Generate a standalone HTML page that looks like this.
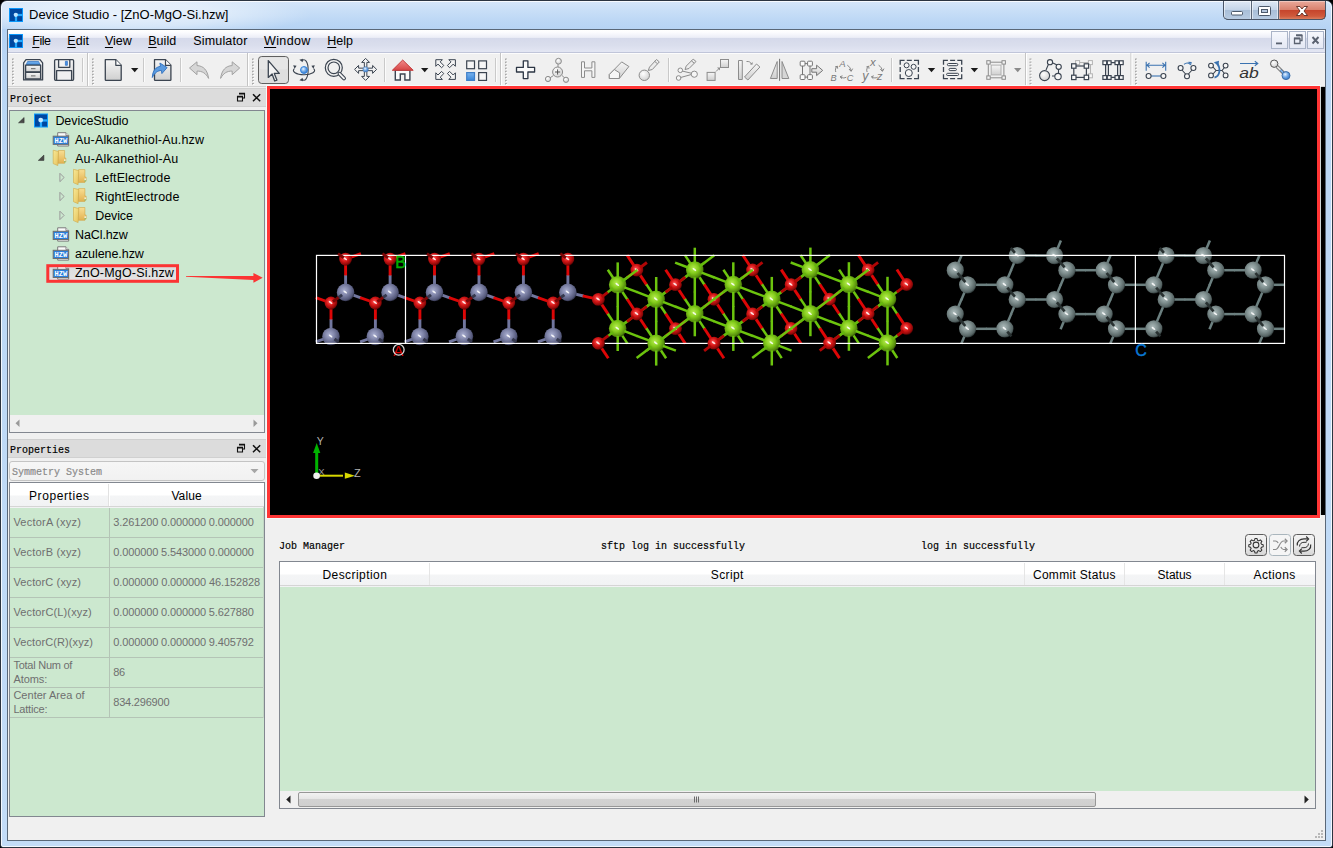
<!DOCTYPE html>
<html><head><meta charset="utf-8"><title>Device Studio</title>
<style>
*{box-sizing:border-box;margin:0;padding:0}
html,body{width:1333px;height:848px;overflow:hidden;background:#000}
body{font-family:"Liberation Sans",sans-serif;font-size:13px;color:#000;position:relative}
.a{position:absolute}
#frame{left:0;top:0;width:1333px;height:848px;background:linear-gradient(180deg,#d6e6f9 0,#c9dff7 9px,#bcd7f5 20px,#b5d3f4 29px,#b9d6f5 60px,#bed9f6 400px,#c3dcf7 100%);border:1px solid #2b3440;border-radius:7px 7px 3px 3px;overflow:hidden}
#frame:before{content:"";position:absolute;left:0;top:0;right:0;bottom:0;border:1px solid rgba(255,255,255,.8);border-radius:6px 6px 2px 2px}
#title{left:29px;top:6px;font-size:13px;line-height:18px;white-space:nowrap}
#client{left:7px;top:29px;width:1319px;height:812px;background:#f0f0f0;border:1px solid #5a6878}
#menubar{left:8px;top:30px;width:1317px;height:23px;background:linear-gradient(180deg,#ffffff 0,#fbfbfe 12%,#eceef7 34%,#d5d9ea 35%,#dadeed 70%,#e3e6f3 100%);border-bottom:1px solid #c0c5d9}
.mi{position:absolute;top:33px;font-size:12.5px;line-height:17px;white-space:nowrap}
.mi u{text-decoration:underline;text-underline-offset:2px;text-decoration-thickness:1px}
.mono{-webkit-text-stroke:.2px currentColor;font-family:"Liberation Mono",monospace;font-size:11px;transform:scaleX(.909);transform-origin:0 50%;white-space:nowrap}
.dockt{left:8px;width:258px;height:19px;background:#dcdcdc;border-top:1px solid #d0d0d0;border-bottom:1px solid #d0d0d0}
.green{background:#cce8cf}
.hdr{background:linear-gradient(180deg,#ffffff 0,#ffffff 48%,#f4f5f6 52%,#f1f2f4 100%)}
.tl{position:absolute;font-size:13.4px;line-height:18px;white-space:nowrap}
.pc{position:absolute;font-size:11px;line-height:14px;color:#6f6f6f;white-space:nowrap}
.hl{position:absolute;height:1px;background:#b4c4b6}
.vl{position:absolute;width:1px;background:#b4c4b6}
.th{position:absolute;font-size:13.4px;line-height:18px;white-space:nowrap;text-align:center}
</style></head><body>
<div id="frame" class="a"></div>
<div class="a" style="left:2px;top:2px;width:330px;height:27px;background:radial-gradient(ellipse 190px 22px at 120px 13px,rgba(255,255,255,.62),rgba(255,255,255,.42) 55%,rgba(255,255,255,0) 100%)"></div>
<div id="title" class="a">Device Studio - [ZnO-MgO-Si.hzw]</div>
<div id="client" class="a"></div>
<div id="menubar" class="a"></div>
<div class="mi" style="left:32.2px;letter-spacing:-0.46px"><u>F</u>ile</div>
<div class="mi" style="left:67.3px;letter-spacing:0.04px"><u>E</u>dit</div>
<div class="mi" style="left:104.9px;letter-spacing:-0.02px"><u>V</u>iew</div>
<div class="mi" style="left:148.2px;letter-spacing:0.04px"><u>B</u>uild</div>
<div class="mi" style="left:193.3px;letter-spacing:0.15px">Simulator</div>
<div class="mi" style="left:264.0px;letter-spacing:0.37px"><u>W</u>indow</div>
<div class="mi" style="left:327.3px;letter-spacing:-0.03px"><u>H</u>elp</div>
<svg class="a" style="left:9px;top:34px" width="14" height="14" viewBox="0 0 15 15"><rect width="15" height="15" fill="#0a9cff"/><rect x="1" y="1" width="13" height="13" fill="#0047a0"/><rect x="6.3" y="7" width="2.4" height="7.5" fill="#22a8ff"/><rect x="7" y="6.3" width="7.5" height="2.4" fill="#22a8ff"/><circle cx="7.3" cy="7.3" r="2.3" fill="#bfe6ff"/></svg>
<svg class="a" style="left:9px;top:8px" width="14" height="14" viewBox="0 0 15 15"><rect width="15" height="15" fill="#0a9cff"/><rect x="1" y="1" width="13" height="13" fill="#0047a0"/><rect x="6.3" y="7" width="2.4" height="7.5" fill="#22a8ff"/><rect x="7" y="6.3" width="7.5" height="2.4" fill="#22a8ff"/><circle cx="7.3" cy="7.3" r="2.3" fill="#bfe6ff"/></svg>
<div class="a" style="left:1223px;top:1px;width:103px;height:19px;border:1px solid #4a5566;border-top:none;border-radius:0 0 5px 5px;overflow:hidden;background:#000">
 <div class="a" style="left:0;top:0;width:28px;height:19px;background:linear-gradient(180deg,#dfe9f5 0,#c5d5e8 45%,#a9bfd8 50%,#b9cde3 100%);border-right:1px solid #5a6676;box-shadow:inset 0 0 0 1px rgba(255,255,255,.55)"></div>
 <div class="a" style="left:28px;top:0;width:27px;height:19px;background:linear-gradient(180deg,#dfe9f5 0,#c5d5e8 45%,#a9bfd8 50%,#b9cde3 100%);border-right:1px solid #5a6676;box-shadow:inset 0 0 0 1px rgba(255,255,255,.55)"></div>
 <div class="a" style="left:55px;top:0;width:47px;height:19px;background:linear-gradient(180deg,#e9a99b 0,#d9826f 45%,#c6452c 50%,#cf5a3c 80%,#dd8a6a 100%);box-shadow:inset 0 0 0 1px rgba(255,255,255,.35)"></div>
</div>
<svg class="a" style="left:1223px;top:0.5px" width="103" height="20" viewBox="0 0 103 20">
 <rect x="8.5" y="10.5" width="11" height="3.5" rx="1" fill="#fff" stroke="#4d5a6b" stroke-width="1"/>
 <rect x="35.5" y="5.5" width="12" height="9" rx="1" fill="#fff" stroke="#4d5a6b" stroke-width="1"/>
 <rect x="38.5" y="8.5" width="6" height="3" fill="#b5c6dc" stroke="#4d5a6b" stroke-width="1"/>
 <path d="M73.5 5.5 L77 5.5 L79 8 L81 5.5 L84.5 5.5 L81 10 L84.5 14.5 L81 14.5 L79 12 L77 14.5 L73.5 14.5 L77 10 Z" fill="#fff" stroke="#5c2a20" stroke-width="0.9" stroke-linejoin="round"/>
</svg>
<!-- mdi buttons -->
<div class="a" style="left:1271px;top:31px;width:17px;height:18px;border:1px solid #aab4c8;background:linear-gradient(180deg,#f6f8fd,#e4e8f4)"></div>
<div class="a" style="left:1289px;top:31px;width:17px;height:18px;border:1px solid #aab4c8;background:linear-gradient(180deg,#f6f8fd,#e4e8f4)"></div>
<div class="a" style="left:1307px;top:31px;width:17px;height:18px;border:1px solid #aab4c8;background:linear-gradient(180deg,#f6f8fd,#e4e8f4)"></div>
<svg class="a" style="left:1271px;top:31px" width="53" height="18" viewBox="0 0 53 18">
 <rect x="5" y="11.5" width="6" height="1.8" fill="#5a6270"/>
 <path d="M25.5 4.5h5.5v5h-2M23.5 7.5h5.5v5h-5.5z" fill="none" stroke="#5a6270" stroke-width="1.3"/>
 <path d="M25 4.2h6.2" stroke="#5a6270" stroke-width="1.8"/><path d="M23 7.4h6" stroke="#5a6270" stroke-width="1.8"/>
 <path d="M41.5 6 L47.5 12.5 M47.5 6 L41.5 12.5" stroke="#5a6270" stroke-width="1.9"/>
</svg>

<div class="a" style="left:8px;top:53px;width:1317px;height:1px;background:#fcfcfc"></div><!--TB0--><svg class="a" style="left:8px;top:53px" width="1317" height="34" viewBox="8 53 1317 34"><defs><linearGradient id="gg" x1="0" y1="0" x2="0" y2="1"><stop offset="0" stop-color="#f6f6f6"/><stop offset="1" stop-color="#cfcfcf"/></linearGradient><linearGradient id="gb" x1="0" y1="0" x2="0" y2="1"><stop offset="0" stop-color="#7ab4ee"/><stop offset="1" stop-color="#3a86d8"/></linearGradient><radialGradient id="rb" cx=".4" cy=".35" r=".7"><stop offset="0" stop-color="#e8f3ff"/><stop offset=".5" stop-color="#6fa8e6"/><stop offset="1" stop-color="#2f74c8"/></radialGradient><radialGradient id="rg" cx=".4" cy=".35" r=".7"><stop offset="0" stop-color="#fff"/><stop offset="1" stop-color="#cfcfcf"/></radialGradient><linearGradient id="gr" x1="0" y1="0" x2="0" y2="1"><stop offset="0" stop-color="#f28a8a"/><stop offset="1" stop-color="#d64545"/></linearGradient></defs>
<rect x="8" y="86" width="1317" height="1" fill="#d2d2d2"/>
<rect x="12" y="58.5" width="2" height="1.6" fill="#a8a8a8"/><rect x="13" y="59.5" width="1.4" height="1.2" fill="#fff"/><rect x="12" y="61.55" width="2" height="1.6" fill="#a8a8a8"/><rect x="13" y="62.55" width="1.4" height="1.2" fill="#fff"/><rect x="12" y="64.6" width="2" height="1.6" fill="#a8a8a8"/><rect x="13" y="65.6" width="1.4" height="1.2" fill="#fff"/><rect x="12" y="67.64999999999999" width="2" height="1.6" fill="#a8a8a8"/><rect x="13" y="68.64999999999999" width="1.4" height="1.2" fill="#fff"/><rect x="12" y="70.69999999999999" width="2" height="1.6" fill="#a8a8a8"/><rect x="13" y="71.69999999999999" width="1.4" height="1.2" fill="#fff"/><rect x="12" y="73.74999999999999" width="2" height="1.6" fill="#a8a8a8"/><rect x="13" y="74.74999999999999" width="1.4" height="1.2" fill="#fff"/><rect x="12" y="76.79999999999998" width="2" height="1.6" fill="#a8a8a8"/><rect x="13" y="77.79999999999998" width="1.4" height="1.2" fill="#fff"/><rect x="12" y="79.84999999999998" width="2" height="1.6" fill="#a8a8a8"/><rect x="13" y="80.84999999999998" width="1.4" height="1.2" fill="#fff"/><rect x="12" y="82.89999999999998" width="2" height="1.6" fill="#a8a8a8"/><rect x="13" y="83.89999999999998" width="1.4" height="1.2" fill="#fff"/>
<rect x="92" y="58.5" width="2" height="1.6" fill="#a8a8a8"/><rect x="93" y="59.5" width="1.4" height="1.2" fill="#fff"/><rect x="92" y="61.55" width="2" height="1.6" fill="#a8a8a8"/><rect x="93" y="62.55" width="1.4" height="1.2" fill="#fff"/><rect x="92" y="64.6" width="2" height="1.6" fill="#a8a8a8"/><rect x="93" y="65.6" width="1.4" height="1.2" fill="#fff"/><rect x="92" y="67.64999999999999" width="2" height="1.6" fill="#a8a8a8"/><rect x="93" y="68.64999999999999" width="1.4" height="1.2" fill="#fff"/><rect x="92" y="70.69999999999999" width="2" height="1.6" fill="#a8a8a8"/><rect x="93" y="71.69999999999999" width="1.4" height="1.2" fill="#fff"/><rect x="92" y="73.74999999999999" width="2" height="1.6" fill="#a8a8a8"/><rect x="93" y="74.74999999999999" width="1.4" height="1.2" fill="#fff"/><rect x="92" y="76.79999999999998" width="2" height="1.6" fill="#a8a8a8"/><rect x="93" y="77.79999999999998" width="1.4" height="1.2" fill="#fff"/><rect x="92" y="79.84999999999998" width="2" height="1.6" fill="#a8a8a8"/><rect x="93" y="80.84999999999998" width="1.4" height="1.2" fill="#fff"/><rect x="92" y="82.89999999999998" width="2" height="1.6" fill="#a8a8a8"/><rect x="93" y="83.89999999999998" width="1.4" height="1.2" fill="#fff"/>
<rect x="252" y="58.5" width="2" height="1.6" fill="#a8a8a8"/><rect x="253" y="59.5" width="1.4" height="1.2" fill="#fff"/><rect x="252" y="61.55" width="2" height="1.6" fill="#a8a8a8"/><rect x="253" y="62.55" width="1.4" height="1.2" fill="#fff"/><rect x="252" y="64.6" width="2" height="1.6" fill="#a8a8a8"/><rect x="253" y="65.6" width="1.4" height="1.2" fill="#fff"/><rect x="252" y="67.64999999999999" width="2" height="1.6" fill="#a8a8a8"/><rect x="253" y="68.64999999999999" width="1.4" height="1.2" fill="#fff"/><rect x="252" y="70.69999999999999" width="2" height="1.6" fill="#a8a8a8"/><rect x="253" y="71.69999999999999" width="1.4" height="1.2" fill="#fff"/><rect x="252" y="73.74999999999999" width="2" height="1.6" fill="#a8a8a8"/><rect x="253" y="74.74999999999999" width="1.4" height="1.2" fill="#fff"/><rect x="252" y="76.79999999999998" width="2" height="1.6" fill="#a8a8a8"/><rect x="253" y="77.79999999999998" width="1.4" height="1.2" fill="#fff"/><rect x="252" y="79.84999999999998" width="2" height="1.6" fill="#a8a8a8"/><rect x="253" y="80.84999999999998" width="1.4" height="1.2" fill="#fff"/><rect x="252" y="82.89999999999998" width="2" height="1.6" fill="#a8a8a8"/><rect x="253" y="83.89999999999998" width="1.4" height="1.2" fill="#fff"/>
<rect x="505" y="58.5" width="2" height="1.6" fill="#a8a8a8"/><rect x="506" y="59.5" width="1.4" height="1.2" fill="#fff"/><rect x="505" y="61.55" width="2" height="1.6" fill="#a8a8a8"/><rect x="506" y="62.55" width="1.4" height="1.2" fill="#fff"/><rect x="505" y="64.6" width="2" height="1.6" fill="#a8a8a8"/><rect x="506" y="65.6" width="1.4" height="1.2" fill="#fff"/><rect x="505" y="67.64999999999999" width="2" height="1.6" fill="#a8a8a8"/><rect x="506" y="68.64999999999999" width="1.4" height="1.2" fill="#fff"/><rect x="505" y="70.69999999999999" width="2" height="1.6" fill="#a8a8a8"/><rect x="506" y="71.69999999999999" width="1.4" height="1.2" fill="#fff"/><rect x="505" y="73.74999999999999" width="2" height="1.6" fill="#a8a8a8"/><rect x="506" y="74.74999999999999" width="1.4" height="1.2" fill="#fff"/><rect x="505" y="76.79999999999998" width="2" height="1.6" fill="#a8a8a8"/><rect x="506" y="77.79999999999998" width="1.4" height="1.2" fill="#fff"/><rect x="505" y="79.84999999999998" width="2" height="1.6" fill="#a8a8a8"/><rect x="506" y="80.84999999999998" width="1.4" height="1.2" fill="#fff"/><rect x="505" y="82.89999999999998" width="2" height="1.6" fill="#a8a8a8"/><rect x="506" y="83.89999999999998" width="1.4" height="1.2" fill="#fff"/>
<rect x="1029.5" y="58.5" width="2" height="1.6" fill="#a8a8a8"/><rect x="1030.5" y="59.5" width="1.4" height="1.2" fill="#fff"/><rect x="1029.5" y="61.55" width="2" height="1.6" fill="#a8a8a8"/><rect x="1030.5" y="62.55" width="1.4" height="1.2" fill="#fff"/><rect x="1029.5" y="64.6" width="2" height="1.6" fill="#a8a8a8"/><rect x="1030.5" y="65.6" width="1.4" height="1.2" fill="#fff"/><rect x="1029.5" y="67.64999999999999" width="2" height="1.6" fill="#a8a8a8"/><rect x="1030.5" y="68.64999999999999" width="1.4" height="1.2" fill="#fff"/><rect x="1029.5" y="70.69999999999999" width="2" height="1.6" fill="#a8a8a8"/><rect x="1030.5" y="71.69999999999999" width="1.4" height="1.2" fill="#fff"/><rect x="1029.5" y="73.74999999999999" width="2" height="1.6" fill="#a8a8a8"/><rect x="1030.5" y="74.74999999999999" width="1.4" height="1.2" fill="#fff"/><rect x="1029.5" y="76.79999999999998" width="2" height="1.6" fill="#a8a8a8"/><rect x="1030.5" y="77.79999999999998" width="1.4" height="1.2" fill="#fff"/><rect x="1029.5" y="79.84999999999998" width="2" height="1.6" fill="#a8a8a8"/><rect x="1030.5" y="80.84999999999998" width="1.4" height="1.2" fill="#fff"/><rect x="1029.5" y="82.89999999999998" width="2" height="1.6" fill="#a8a8a8"/><rect x="1030.5" y="83.89999999999998" width="1.4" height="1.2" fill="#fff"/>
<rect x="1135" y="58.5" width="2" height="1.6" fill="#a8a8a8"/><rect x="1136" y="59.5" width="1.4" height="1.2" fill="#fff"/><rect x="1135" y="61.55" width="2" height="1.6" fill="#a8a8a8"/><rect x="1136" y="62.55" width="1.4" height="1.2" fill="#fff"/><rect x="1135" y="64.6" width="2" height="1.6" fill="#a8a8a8"/><rect x="1136" y="65.6" width="1.4" height="1.2" fill="#fff"/><rect x="1135" y="67.64999999999999" width="2" height="1.6" fill="#a8a8a8"/><rect x="1136" y="68.64999999999999" width="1.4" height="1.2" fill="#fff"/><rect x="1135" y="70.69999999999999" width="2" height="1.6" fill="#a8a8a8"/><rect x="1136" y="71.69999999999999" width="1.4" height="1.2" fill="#fff"/><rect x="1135" y="73.74999999999999" width="2" height="1.6" fill="#a8a8a8"/><rect x="1136" y="74.74999999999999" width="1.4" height="1.2" fill="#fff"/><rect x="1135" y="76.79999999999998" width="2" height="1.6" fill="#a8a8a8"/><rect x="1136" y="77.79999999999998" width="1.4" height="1.2" fill="#fff"/><rect x="1135" y="79.84999999999998" width="2" height="1.6" fill="#a8a8a8"/><rect x="1136" y="80.84999999999998" width="1.4" height="1.2" fill="#fff"/><rect x="1135" y="82.89999999999998" width="2" height="1.6" fill="#a8a8a8"/><rect x="1136" y="83.89999999999998" width="1.4" height="1.2" fill="#fff"/>
<rect x="82.0" y="58" width="1" height="24" fill="#c9c9c9"/><rect x="83.0" y="58" width="1" height="24" fill="#fbfbfb"/>
<rect x="143.0" y="58" width="1" height="24" fill="#c9c9c9"/><rect x="144.0" y="58" width="1" height="24" fill="#fbfbfb"/>
<rect x="180.0" y="58" width="1" height="24" fill="#c9c9c9"/><rect x="181.0" y="58" width="1" height="24" fill="#fbfbfb"/>
<rect x="384.0" y="58" width="1" height="24" fill="#c9c9c9"/><rect x="385.0" y="58" width="1" height="24" fill="#fbfbfb"/>
<rect x="495.0" y="58" width="1" height="24" fill="#c9c9c9"/><rect x="496.0" y="58" width="1" height="24" fill="#fbfbfb"/>
<rect x="668.0" y="58" width="1" height="24" fill="#c9c9c9"/><rect x="669.0" y="58" width="1" height="24" fill="#fbfbfb"/>
<rect x="891.0" y="58" width="1" height="24" fill="#c9c9c9"/><rect x="892.0" y="58" width="1" height="24" fill="#fbfbfb"/>
<rect x="87.0" y="53" width="1" height="33" fill="#c4c4c4"/><rect x="88.0" y="53" width="1" height="33" fill="#ffffff"/>
<rect x="247.0" y="53" width="1" height="33" fill="#c4c4c4"/><rect x="248.0" y="53" width="1" height="33" fill="#ffffff"/>
<rect x="500.0" y="53" width="1" height="33" fill="#c4c4c4"/><rect x="501.0" y="53" width="1" height="33" fill="#ffffff"/>
<rect x="1025.0" y="53" width="1" height="33" fill="#c4c4c4"/><rect x="1026.0" y="53" width="1" height="33" fill="#ffffff"/>
<rect x="1130.5" y="53" width="1" height="33" fill="#c4c4c4"/><rect x="1131.5" y="53" width="1" height="33" fill="#ffffff"/>
<g stroke="#3b4450" stroke-width="1.3" fill="url(#gg)" stroke-linejoin="round"><path d="M26 59.7h14l2.6 3.2v17H23.6v-17z"/><path d="M27.6 61.5h11l1.6 3.6H26z" fill="url(#gb)" stroke="#3d7cc8" stroke-width=".8"/><rect x="25.6" y="65.2" width="15" height="6.6"/><rect x="25.6" y="72.4" width="15" height="6.6"/><path d="M31 68.7h4.5M31 75.9h4.5" stroke="#666" stroke-width="1"/></g>
<g stroke="#3b4450" stroke-width="1.3" fill="url(#gg)" stroke-linejoin="round"><rect x="54.6" y="59.7" width="19" height="20.6" rx="1"/><rect x="58.6" y="59.7" width="11.2" height="7.6" fill="#f4f4f4"/><rect x="56.6" y="70.6" width="15" height="9.7" fill="#f0f0f0"/><rect x="65.4" y="61.3" width="2" height="4" fill="#4b93e6" stroke="#2a6fc4" stroke-width=".7"/></g>
<path d="M105.3 59.7h10.5l5.4 5.6v14.4q0 .7-.7.7h-14.5q-.7 0-.7-.7z" fill="url(#gg)" stroke="#3b4450" stroke-width="1.3" stroke-linejoin="round"/><path d="M115.8 59.7v5.6h5.4" fill="#fff" stroke="#3b4450" stroke-width="1.2" stroke-linejoin="round"/>
<path d="M131 68 h7.4 l-3.7 4.3z" fill="#1a1a1a"/>
<path d="M154.5 59.7h11l5.4 5.6v14.4q0 .7-.7.7h-15q-.7 0-.7-.7z" fill="url(#gg)" stroke="#3b4450" stroke-width="1.3" stroke-linejoin="round"/><path d="M165.5 59.7v5.6h5.4" fill="#fff" stroke="#3b4450" stroke-width="1.2" stroke-linejoin="round"/>
<path d="M152.3 77.5c0.3-7 3.5-10.5 8.2-11.2l-0.6-3.3 7.2 4.6-5.2 6-0.5-3.2c-3.6 0.3-6.5 2-9.1 7.1z" fill="#5b9be0" stroke="#2f6fbd" stroke-width=".9" stroke-linejoin="round"/>
<path d="M189.5 68l7.5-6.2v3.8c6.5 0.2 10.5 4.6 11.6 12.8-2.8-5.2-6.3-7.4-11.6-7.3v3.6z" fill="#d6d6d6" stroke="#a2a2a2" stroke-width="1" stroke-linejoin="round"/>
<path d="M239.7 68l-7.5-6.2v3.8c-6.5 0.2-10.5 4.6-11.6 12.8 2.8-5.2 6.3-7.4 11.6-7.3v3.6z" fill="#d6d6d6" stroke="#a2a2a2" stroke-width="1" stroke-linejoin="round"/>
<rect x="258.5" y="56.5" width="30" height="27" rx="3.2" fill="#dedede" stroke="#5f5f5f" stroke-width="1"/><rect x="259.5" y="57.5" width="28" height="12" rx="2" fill="#e6e6e6"/>
<path d="M268.3 60.6v16.8l3.8-3.4 2.6 7 2.2-.9-2.6-6.7h5z" fill="#f2f2f2" stroke="#3b4450" stroke-width="1.3" stroke-linejoin="round"/>
<g fill="none" stroke="#3b4450" stroke-width="1.1"><path d="M294.4 68.7A10.6 4.2 0 0 0 304 74.7A10.6 4.2 0 0 0 313.6 68.7"/><path d="M302 60.9A4.2 10.3 0 1 1 302 79.1"/></g><path d="M293.2 65.200l3.4.6-2 3z M314.8 65.200l-3.4.6 2 3z M299.4 59.800l3.6-1 -.4 3.400z M299.4 80.200l3.6 1-.4-3.400z" fill="#3b4450"/><circle cx="304" cy="70" r="3.5" fill="url(#rb)" stroke="#2f7fd8" stroke-width=".9"/>
<g fill="none" stroke="#3b4450"><circle cx="333.8" cy="67.8" r="8.5" stroke-width="1.2"/><circle cx="333.8" cy="67.8" r="5.8" stroke-width="1.2"/><path d="M339.6 73.800l4.4 4.6" stroke-width="4" stroke-linecap="round"/><path d="M339.6 73.800l4.4 4.6" stroke="#f4f4f4" stroke-width="1.9" stroke-linecap="round"/></g>
<path d="M364.35 67.4V62.400000000000006h-2.7l3.95-4 3.95 4h-2.7V67.4z" transform="rotate(0 365.6 69.4)" fill="#f4f4f4" stroke="#3b4450" stroke-width="1" stroke-linejoin="round"/><path d="M364.35 67.4V62.400000000000006h-2.7l3.95-4 3.95 4h-2.7V67.4z" transform="rotate(90 365.6 69.4)" fill="#f4f4f4" stroke="#3b4450" stroke-width="1" stroke-linejoin="round"/><path d="M364.35 67.4V62.400000000000006h-2.7l3.95-4 3.95 4h-2.7V67.4z" transform="rotate(180 365.6 69.4)" fill="#f4f4f4" stroke="#3b4450" stroke-width="1" stroke-linejoin="round"/><path d="M364.35 67.4V62.400000000000006h-2.7l3.95-4 3.95 4h-2.7V67.4z" transform="rotate(270 365.6 69.4)" fill="#f4f4f4" stroke="#3b4450" stroke-width="1" stroke-linejoin="round"/><circle cx="365.6" cy="69.4" r="2.7" fill="url(#rb)" stroke="#5a7fae" stroke-width=".5"/>
<path d="M395.3 70v10h5v-6h4.6v6h5V70z" fill="#fafafa" stroke="#3b4450" stroke-width="1.4" stroke-linejoin="miter"/><path d="M392.3 70.3L402.7 60l10.5 10.3z" fill="url(#gr)" stroke="#c43c3c" stroke-width="1" stroke-linejoin="round"/>
<path d="M421 68 h7.4 l-3.7 4.3z" fill="#1a1a1a"/>
<g transform="translate(435.8,59.7) scale(1,1)"><path d="M0 0h6.6l-2.2 2.2 3.6 3.6-2.2 2.2-3.6-3.6L0 6.6z" fill="#f4f4f4" stroke="#3b4450" stroke-width="1" stroke-linejoin="round"/></g><g transform="translate(455.4,59.7) scale(-1,1)"><path d="M0 0h6.6l-2.2 2.2 3.6 3.6-2.2 2.2-3.6-3.6L0 6.6z" fill="#f4f4f4" stroke="#3b4450" stroke-width="1" stroke-linejoin="round"/></g><g transform="translate(435.8,79.4) scale(1,-1)"><path d="M0 0h6.6l-2.2 2.2 3.6 3.6-2.2 2.2-3.6-3.6L0 6.6z" fill="#f4f4f4" stroke="#3b4450" stroke-width="1" stroke-linejoin="round"/></g><g transform="translate(455.4,79.4) scale(-1,-1)"><path d="M0 0h6.6l-2.2 2.2 3.6 3.6-2.2 2.2-3.6-3.6L0 6.6z" fill="#f4f4f4" stroke="#3b4450" stroke-width="1" stroke-linejoin="round"/></g>
<g stroke="#3b4450" stroke-width="1.2" fill="#f6f6f6"><rect x="466.7" y="60.9" width="7.8" height="7.8"/><rect x="478.7" y="60.9" width="7.8" height="7.8"/><rect x="478.7" y="72.6" width="7.8" height="7.8"/><rect x="466.7" y="72.6" width="7.8" height="7.8" fill="url(#gb)" stroke="#3f7fc8"/></g>
<path d="M523.3 60.9h4.6v6.5h6.7v4.6h-6.7v6.6h-4.6v-6.6h-6.8v-4.6h6.8z" fill="#fafafa" stroke="#2c3644" stroke-width="1.3" stroke-linejoin="round"/>
<g stroke="#8c8c8c" stroke-width="1"><path d="M558 64v4M553.5 75.5l-3.5 2.3M562 75.5l3 2.8" /><circle cx="558.5" cy="61.2" r="2.9" fill="url(#rg)"/><circle cx="548" cy="79" r="2.6" fill="url(#rg)"/><circle cx="566" cy="79.8" r="2.6" fill="url(#rg)"/><circle cx="557.6" cy="72" r="5" fill="url(#rg)"/><path d="M555 72h5.2M557.6 69.4v5.2" stroke="#555" stroke-width="1"/></g>
<path d="M581.5 61.8h3v6.2h7.4v-6.2h3v15.6h-3v-6.6h-7.4v6.6h-3z" fill="#f6f6f6" stroke="#8c8c8c" stroke-width="1" stroke-linejoin="round"/>
<path d="M609.3 74.5l12.4-12.6 7.2 4.6-9.6 12h-10z" fill="url(#gg)" stroke="#8c8c8c" stroke-width="1" stroke-linejoin="round"/><path d="M609.3 74.5l5-5 5.4 3.4-0.4 5.6h-10z" fill="#f6f6f6" stroke="#8c8c8c" stroke-width="1" stroke-linejoin="round"/>
<circle cx="644.3" cy="75.3" r="5.2" fill="url(#rg)" stroke="#8c8c8c" stroke-width="1"/><path d="M648.3 70.5l1.2-3.4 7-7.6 2.8 2.4-7 7.6z" fill="#ececec" stroke="#8c8c8c" stroke-width="1" stroke-linejoin="round"/><path d="M654.6 61.3l2.8 2.4" stroke="#8c8c8c" stroke-width="1"/>
<g stroke="#8c8c8c" stroke-width="1"><path d="M680 70.5l12.5 3M679.5 77.8l13-3.6"/><circle cx="680.3" cy="70.3" r="2.3" fill="#f6f6f6"/><circle cx="678.6" cy="78" r="2.3" fill="#f6f6f6"/><circle cx="694.3" cy="74.2" r="3.1" fill="#f6f6f6"/><path d="M685 69.5l1.2-3.4 7-7 2.8 2.4-7 7z" fill="#ececec" stroke-linejoin="round"/><path d="M691.4 60.8l2.8 2.4"/></g>
<g stroke="#8c8c8c" stroke-width="1" fill="url(#gg)"><rect x="707.1" y="72.4" width="8" height="8"/><rect x="720.5" y="59.5" width="8" height="8"/><path d="M716 71.5l3.5-3.5" fill="none"/><path d="M717 67.6h3v3z" fill="#8c8c8c" stroke="none"/></g>
<g stroke="#8c8c8c" stroke-width="1" fill="url(#gg)" stroke-linejoin="round"><rect x="738.5" y="60.5" width="3.8" height="19"/><path d="M744.5 77l12-13 3.4 3-12 13z"/><path d="M746.5 61.5c2.5-.3 4.3.6 5 2.8" fill="none"/><path d="M750 64.6h2.6v-2.6z" fill="#8c8c8c" stroke="none"/></g>
<g stroke="#8c8c8c" stroke-width="1" stroke-linejoin="round"><path d="M770.4 78.5h6.8v-17z" fill="url(#gg)"/><path d="M788.8 78.5h-6.8v-17z" fill="#d6d6d6"/><path d="M779.6 58.8v22" stroke="#707070"/></g>
<g stroke="#757575" stroke-width="1" fill="#fbfbfb"><path d="M802.5 66v9M810 66v9M805 63.600h2.500M805 77.100h2.5" fill="none"/><rect x="800.2" y="61.2" width="4.8" height="4.8" rx=".9"/><rect x="807.6" y="61.2" width="4.8" height="4.8" rx=".9"/><rect x="800.2" y="74.7" width="4.8" height="4.8" rx=".9"/><rect x="807.6" y="74.7" width="4.8" height="4.8" rx=".9"/><path d="M811.8 68.700h4.800v-3.500l6.1 5.2-6.1 5.200v-3.400h-4.800z" fill="url(#gg)" stroke-linejoin="round"/></g>
<g font-family="Liberation Sans" font-style="italic" fill="#7a7a7a"><text x="839.3" y="66.9" font-size="9.6">A</text><text x="830.4" y="80.7" font-size="9.2">B</text><text x="846.8" y="80.7" font-size="9.2">C</text></g><g fill="none" stroke="#7a7a7a" stroke-width=".9"><path d="M847.3 65.200c2.2 1.4 3.3 3.2 3.8 5.8"/><path d="M849 69l2.1 2.4 1.6-2.8"/><path d="M846.3 77.200c-1.8 1-3.6 1-5.6-.2"/><path d="M842.8 75.800l-2.5 1 2 1.9" transform="translate(-.3,0)"/><path d="M835.8 72c-.8-2.2-.3-3.9 1.2-5.4"/><path d="M835 67l2.4-.8.3 2.5"/></g>
<g font-family="Liberation Sans" font-style="italic" fill="#7a7a7a"><text x="870" y="65.8" font-size="11.5">x</text><text x="862.3" y="79.6" font-size="12.5">y</text><text x="876.8" y="79.7" font-size="11.5">z</text></g><g fill="none" stroke="#7a7a7a" stroke-width=".9"><path d="M878.5999999999999 65.200c2.2 1.4 3.3 3.2 3.8 5.8"/><path d="M880.3 69l2.1 2.4 1.6-2.8"/><path d="M877.5999999999999 77.200c-1.8 1-3.6 1-5.6-.2"/><path d="M874.0999999999999 75.800l-2.5 1 2 1.9" transform="translate(-.3,0)"/><path d="M867.0999999999999 72c-.8-2.2-.3-3.9 1.2-5.4"/><path d="M866.3 67l2.4-.8.3 2.5"/></g>
<g fill="none" stroke="#3b4450" stroke-width="1.3"><path d="M900.2 64.8v-4.4h4.4M914.0000000000001 60.4h4.4v4.4M918.4000000000001 74.19999999999999v4.4h-4.4M904.6 78.6h-4.4v-4.4"/><path d="M906.8000000000001 60.4h4.999999999999998M906.8000000000001 78.6h4.999999999999998M900.2 67.0v4.999999999999998M918.4000000000001 67.0v4.999999999999998"/></g>
<g fill="#f6f6f6" stroke="#3b4450" stroke-width="1"><circle cx="906.6" cy="65.3" r="2.5"/><circle cx="913.6" cy="66.8" r="2.5"/><circle cx="908.8" cy="73" r="3.5"/></g>
<path d="M927.8 68 h7.4 l-3.7 4.3z" fill="#1a1a1a"/>
<g fill="none" stroke="#3b4450" stroke-width="1.3"><path d="M943.5 64.8v-4.4h4.4M957.3000000000001 60.4h4.4v4.4M961.7 74.19999999999999v4.4h-4.4M947.9 78.6h-4.4v-4.4"/><path d="M950.1 60.4h4.999999999999998M950.1 78.6h4.999999999999998M943.5 67.0v4.999999999999998M961.7 67.0v4.999999999999998"/></g>
<g fill="#f6f6f6" stroke="#3b4450" stroke-width="1"><rect x="947.4" y="63.5" width="10.4" height="2.2" rx="1.1"/><rect x="949" y="68.4" width="7.4" height="2.2" rx="1.1"/><rect x="946.6" y="73.3" width="12" height="2.2" rx="1.1"/></g>
<path d="M970.7 68 h7.4 l-3.7 4.3z" fill="#1a1a1a"/>
<g stroke="#8c8c8c" stroke-width="1" fill="#f4f4f4"><rect x="988.3" y="62.2" width="15.6" height="15.6" fill="none"/><rect x="991.2" y="65.1" width="9.8" height="9.8" fill="url(#gg)" stroke="#b0b0b0"/><rect x="986.8" y="60.7" width="3.4" height="3.4"/><rect x="1002" y="60.7" width="3.4" height="3.4"/><rect x="986.8" y="75.9" width="3.4" height="3.4"/><rect x="1002" y="75.9" width="3.4" height="3.4"/></g>
<path d="M1014 68 h7.4 l-3.7 4.3z" fill="#8a8a8a"/>
<g stroke="#3b4450" stroke-width="1.1"><path d="M1046 70l3-7M1053 63l5 2.5M1058.5 69v5M1052 76h3" fill="none"/><circle cx="1050" cy="62.2" r="2.6" fill="#f6f6f6"/><circle cx="1058.7" cy="66.8" r="2.6" fill="#f6f6f6"/><circle cx="1058" cy="76.6" r="3.2" fill="#f6f6f6"/><circle cx="1044.6" cy="75.6" r="5" fill="url(#rg)"/></g>
<g stroke="#b4b4b4" stroke-width="1" fill="#f8f8f8"><path d="M1078 62.5h12.5v12.5" fill="none"/><rect x="1075.6" y="60.6" width="4" height="4"/><rect x="1088.4" y="60.6" width="4" height="4"/><rect x="1088.4" y="73.8" width="4" height="4"/></g>
<g stroke="#3b4450" stroke-width="1.2" fill="#fafafa"><rect x="1073.8" y="66" width="12.6" height="11.4" fill="none"/><rect x="1071.6" y="63.8" width="4.4" height="4.4"/><rect x="1084.2" y="63.8" width="4.4" height="4.4"/><rect x="1071.6" y="75.2" width="4.4" height="4.4"/><rect x="1084.2" y="75.2" width="4.4" height="4.4"/></g>
<g stroke="#3b4450" stroke-width="1.2" fill="#fafafa"><path d="M1104 62.7h18M1104 77.3h18M1105.6 62v16M1108.4 62v16M1117.6 62v16M1120.4 62v16" fill="none"/><rect x="1102.9" y="60.8" width="3.8" height="3.8"/><rect x="1107.3" y="60.8" width="3.8" height="3.8"/><rect x="1115" y="60.8" width="3.8" height="3.8"/><rect x="1119.4" y="60.8" width="3.8" height="3.8"/><rect x="1102.9" y="75.6" width="3.8" height="3.8"/><rect x="1107.3" y="75.6" width="3.8" height="3.8"/><rect x="1115" y="75.6" width="3.8" height="3.8"/><rect x="1119.4" y="75.6" width="3.8" height="3.8"/></g>
<g fill="none" stroke="#3a72b0" stroke-width="1.1"><path d="M1146.2 61.8v9M1165.7 61.8v9M1147 65.2h18M1149.6 62.8l-2.6 2.4 2.6 2.4M1162.4 62.8l2.6 2.4-2.6 2.4"/></g><g stroke="#3b4450" stroke-width="1.1" fill="#f6f6f6"><path d="M1151 76h10" stroke="#3a72b0"/><circle cx="1148.6" cy="76" r="2.5"/><circle cx="1163.4" cy="76" r="2.5"/></g>
<g stroke="#3b4450" stroke-width="1.1" fill="#f6f6f6"><path d="M1181.5 69.5l4.5 5M1192.5 69.5l-4.5 5" fill="none"/><circle cx="1180.6" cy="68" r="2.5"/><circle cx="1193.4" cy="68" r="2.5"/><circle cx="1187" cy="76.2" r="2.5"/></g><path d="M1184 64.4c2-1.8 4.2-1.8 6.2-.2" fill="none" stroke="#3a72b0" stroke-width="1.1"/><path d="M1188.4 62.3l2.7.3-.6 2.6" fill="none" stroke="#3a72b0" stroke-width="1.1"/>
<g stroke="#3b4450" stroke-width="1.1" fill="#f6f6f6"><path d="M1213 67l3 3.5-3 3.500M1216 70.500h6l2.5-3M1222 70.500l2.5 3" fill="none"/><circle cx="1211" cy="65.6" r="2.4"/><circle cx="1225.6" cy="65.6" r="2.4"/><circle cx="1211" cy="75.4" r="2.4"/><circle cx="1225.6" cy="75.4" r="2.4"/></g><path d="M1214.5 77.500c5.5-1 6.5-9 2.5-14.5" fill="none" stroke="#3a72b0" stroke-width="1.8"/><path d="M1213.8 62.300l5.2-1.6-.600 5.200z" fill="#3a72b0"/>
<path d="M1240 63.500h17.500M1254.8 61.200l3 2.3-3 2.3" fill="none" stroke="#3a72b0" stroke-width="1.1"/><text x="1239.2" y="77.5" font-family="Liberation Sans" font-style="italic" font-size="15.5" fill="#333" textLength="19.5" lengthAdjust="spacingAndGlyphs">ab</text>
<path d="M1277 66.500l7 7" stroke="#555" stroke-width="3.4"/><path d="M1277 66.500l3.5 3.5" stroke="#e0e0e0" stroke-width="2"/><path d="M1280.5 70l3.5 3.5" stroke="#79aee8" stroke-width="2"/><circle cx="1274.2" cy="63.7" r="3.7" fill="url(#rg)" stroke="#555" stroke-width="1"/><circle cx="1286" cy="75.6" r="4" fill="url(#rb)" stroke="#3b6ea8" stroke-width="1"/></svg><!--TB1-->
<!-- left dock: project -->
<div class="a dockt" style="top:88px"></div>
<div class="a mono" style="left:10px;top:92px;line-height:14px">Project</div>
<div class="a green" style="left:9px;top:110px;width:256px;height:323px;border:1px solid #828790"></div>
<div class="a" style="left:10px;top:415px;width:254px;height:17px;background:#f0f0f0"></div>
<!--TR0--><div class="a" style="left:49px;top:267px;width:127px;height:13px;background:linear-gradient(180deg,#dcdcdc,#e4e4e4)"></div>
<div class="tl" style="left:55.4px;top:112.4px;font-size:12.500px;letter-spacing:-0.05px">DeviceStudio</div>
<div class="tl" style="left:75.0px;top:131.0px;font-size:12.500px;letter-spacing:0.16px">Au-Alkanethiol-Au.hzw</div>
<div class="tl" style="left:75.0px;top:150.0px;font-size:12.500px;letter-spacing:0.20px">Au-Alkanethiol-Au</div>
<div class="tl" style="left:95.3px;top:169.1px;font-size:12.500px;letter-spacing:0.12px">LeftElectrode</div>
<div class="tl" style="left:95.3px;top:188.1px;font-size:12.500px;letter-spacing:0.16px">RightElectrode</div>
<div class="tl" style="left:95.3px;top:207.0px;font-size:12.500px;letter-spacing:-0.13px">Device</div>
<div class="tl" style="left:75.0px;top:226.1px;font-size:12.500px;letter-spacing:-0.10px">NaCl.hzw</div>
<div class="tl" style="left:75.0px;top:245.1px;font-size:12.500px;letter-spacing:-0.06px">azulene.hzw</div>
<div class="tl" style="left:75.0px;top:264.1px;font-size:12.500px;letter-spacing:0.18px">ZnO-MgO-Si.hzw</div>
<svg class="a" style="left:0;top:0" width="267" height="480" viewBox="0 0 267 480"><defs><linearGradient id="fb" x1="0" y1="0" x2="0" y2="1"><stop offset="0" stop-color="#f8de92"/><stop offset="1" stop-color="#e2b252"/></linearGradient><linearGradient id="ff" x1="0" y1="0" x2="1" y2="1"><stop offset="0" stop-color="#f7e996"/><stop offset="1" stop-color="#e6c25c"/></linearGradient></defs><g transform="translate(34,113.5)"><rect width="14" height="14" fill="#0a9cff"/><rect x="1" y="1" width="12" height="12" fill="#0047a0"/><rect x="5.8" y="6.5" width="2.3" height="7" fill="#22a8ff"/><rect x="6.5" y="5.8" width="7" height="2.3" fill="#22a8ff"/><circle cx="6.7" cy="6.6" r="2.4" fill="#c4e8ff"/></g>
<path d="M24.1 117.5v5.300h-5.600z" fill="#4a4a4a" stroke="#262626" stroke-width=".5"/>
<g transform="translate(52.7,131.5)"><path d="M5 1.200h8.200l2.8 2.800v10.500h-11z" fill="#fbfbfb" stroke="#7a7a7a" stroke-width="1"/><path d="M13.2 1.200v2.800h2.8" fill="#e8e8e8" stroke="#7a7a7a" stroke-width=".8"/><rect x=".5" y="4.7" width="15.3" height="8.2" fill="#2b7fdc" stroke="#6f6f6f" stroke-width="1"/><text x="8.2" y="11.4" font-family="Liberation Mono" font-weight="bold" font-size="7" fill="#fff" text-anchor="middle" textLength="12.6" lengthAdjust="spacingAndGlyphs">HZW</text></g>
<g transform="translate(52.7,150.0)"><path d="M5.6 .5h6.300v7.500h1.200v4h-1.200v1.300h-6.700z" fill="url(#fb)" stroke="#d2a648" stroke-width=".6"/><path d="M.5 .2l5.3 1.3-.7 14.1-4.6-2z" fill="url(#ff)" stroke="#cfa848" stroke-width=".6" stroke-linejoin="round"/><rect x="11.6" y="9.3" width="1.1" height="2.2" fill="#fff"/><rect x="11.6" y="11.3" width="1.1" height=".9" fill="#3cae4a"/></g>
<path d="M43.9 155.1v5.300h-5.600z" fill="#4a4a4a" stroke="#262626" stroke-width=".5"/>
<g transform="translate(73,169.1)"><path d="M5.6 .5h6.300v7.500h1.200v4h-1.200v1.300h-6.700z" fill="url(#fb)" stroke="#d2a648" stroke-width=".6"/><path d="M.5 .2l5.3 1.3-.7 14.1-4.6-2z" fill="url(#ff)" stroke="#cfa848" stroke-width=".6" stroke-linejoin="round"/><rect x="11.6" y="9.3" width="1.1" height="2.2" fill="#fff"/><rect x="11.6" y="11.3" width="1.1" height=".9" fill="#3cae4a"/></g>
<path d="M59.9 173.29999999999998l4.2 4.2-4.2 4.200z" fill="none" stroke="#9a9a9a" stroke-width="1" stroke-linejoin="round"/>
<g transform="translate(73,188.1)"><path d="M5.6 .5h6.300v7.500h1.200v4h-1.200v1.300h-6.700z" fill="url(#fb)" stroke="#d2a648" stroke-width=".6"/><path d="M.5 .2l5.3 1.3-.7 14.1-4.6-2z" fill="url(#ff)" stroke="#cfa848" stroke-width=".6" stroke-linejoin="round"/><rect x="11.6" y="9.3" width="1.1" height="2.2" fill="#fff"/><rect x="11.6" y="11.3" width="1.1" height=".9" fill="#3cae4a"/></g>
<path d="M59.9 192.29999999999998l4.2 4.2-4.2 4.200z" fill="none" stroke="#9a9a9a" stroke-width="1" stroke-linejoin="round"/>
<g transform="translate(73,207.0)"><path d="M5.6 .5h6.300v7.500h1.200v4h-1.200v1.300h-6.700z" fill="url(#fb)" stroke="#d2a648" stroke-width=".6"/><path d="M.5 .2l5.3 1.3-.7 14.1-4.6-2z" fill="url(#ff)" stroke="#cfa848" stroke-width=".6" stroke-linejoin="round"/><rect x="11.6" y="9.3" width="1.1" height="2.2" fill="#fff"/><rect x="11.6" y="11.3" width="1.1" height=".9" fill="#3cae4a"/></g>
<path d="M59.9 211.2l4.2 4.2-4.2 4.200z" fill="none" stroke="#9a9a9a" stroke-width="1" stroke-linejoin="round"/>
<g transform="translate(52.7,226.6)"><path d="M5 1.200h8.200l2.8 2.800v10.500h-11z" fill="#fbfbfb" stroke="#7a7a7a" stroke-width="1"/><path d="M13.2 1.200v2.800h2.8" fill="#e8e8e8" stroke="#7a7a7a" stroke-width=".8"/><rect x=".5" y="4.7" width="15.3" height="8.2" fill="#2b7fdc" stroke="#6f6f6f" stroke-width="1"/><text x="8.2" y="11.4" font-family="Liberation Mono" font-weight="bold" font-size="7" fill="#fff" text-anchor="middle" textLength="12.6" lengthAdjust="spacingAndGlyphs">HZW</text></g>
<g transform="translate(52.7,245.6)"><path d="M5 1.200h8.200l2.8 2.800v10.500h-11z" fill="#fbfbfb" stroke="#7a7a7a" stroke-width="1"/><path d="M13.2 1.200v2.800h2.8" fill="#e8e8e8" stroke="#7a7a7a" stroke-width=".8"/><rect x=".5" y="4.7" width="15.3" height="8.2" fill="#2b7fdc" stroke="#6f6f6f" stroke-width="1"/><text x="8.2" y="11.4" font-family="Liberation Mono" font-weight="bold" font-size="7" fill="#fff" text-anchor="middle" textLength="12.6" lengthAdjust="spacingAndGlyphs">HZW</text></g>
<g transform="translate(52.7,264.6)"><path d="M5 1.200h8.200l2.8 2.800v10.500h-11z" fill="#fbfbfb" stroke="#7a7a7a" stroke-width="1"/><path d="M13.2 1.200v2.800h2.8" fill="#e8e8e8" stroke="#7a7a7a" stroke-width=".8"/><rect x=".5" y="4.7" width="15.3" height="8.2" fill="#2b7fdc" stroke="#6f6f6f" stroke-width="1"/><text x="8.2" y="11.4" font-family="Liberation Mono" font-weight="bold" font-size="7" fill="#fff" text-anchor="middle" textLength="12.6" lengthAdjust="spacingAndGlyphs">HZW</text></g>
<rect x="47.8" y="265.7" width="129.7" height="15.6" fill="none" stroke="#fb3434" stroke-width="3"/>
<path d="M186 275.9L253.4 276.1V272.9L262.7 277.8L253.4 282.8V280.1L186 276.7Z" fill="#fb3434"/>
<path d="M19.5 419.500l-4 3.8 4 3.800z" fill="#9a9a9a"/><path d="M253.5 419.500l4 3.8-4 3.800z" fill="#9a9a9a"/></svg><!--TR1-->
<!-- left dock: properties -->
<div class="a dockt" style="top:439px"></div>
<div class="a mono" style="left:10px;top:443px;line-height:14px">Properties</div>
<div class="a" style="left:9px;top:461px;width:256px;height:20px;border:1px solid #c4c4c4;border-radius:3px;background:linear-gradient(180deg,#f6f6f6,#f1f1f1)"></div>
<div class="a mono" style="left:12px;top:465px;line-height:14px;color:#8a8a8a">Symmetry System</div>
<div class="a green" style="left:9px;top:482px;width:256px;height:335px;border:1px solid #828790"></div>
<!--PR0--><div class="a hdr" style="left:10px;top:483px;width:254px;height:25px"></div>
<div class="a" style="left:10px;top:506px;width:254px;height:1px;background:#d5d5d5"></div>
<div class="a" style="left:108px;top:484px;width:2px;height:22px;background:linear-gradient(90deg,#e2e2e2 50%,#fff 50%)"></div>
<div class="th" style="left:29px;top:486.5px;font-size:12px;letter-spacing:0.58px">Properties</div>
<div class="th" style="left:171.4px;top:486.5px;font-size:12px;letter-spacing:0.10px">Value</div>
<div class="hl" style="left:10px;top:537px;width:254px"></div>
<div class="hl" style="left:10px;top:567px;width:254px"></div>
<div class="hl" style="left:10px;top:597px;width:254px"></div>
<div class="hl" style="left:10px;top:627px;width:254px"></div>
<div class="hl" style="left:10px;top:657px;width:254px"></div>
<div class="hl" style="left:10px;top:687px;width:254px"></div>
<div class="hl" style="left:10px;top:717px;width:254px"></div>
<div class="vl" style="left:109px;top:508px;height:210px"></div>
<div class="vl" style="left:263px;top:507px;height:211px;background:#c2d6c4"></div>
<div class="pc" style="left:13.4px;top:515.1px;letter-spacing:0.22px">VectorA (xyz)</div>
<div class="pc" style="left:113.3px;top:515.1px;letter-spacing:-0.13px">3.261200 0.000000 0.000000</div>
<div class="pc" style="left:13.4px;top:545.0px;letter-spacing:0.18px">VectorB (xyz)</div>
<div class="pc" style="left:113.3px;top:545.0px;letter-spacing:-0.13px">0.000000 5.543000 0.000000</div>
<div class="pc" style="left:13.4px;top:575.0px;letter-spacing:0.13px">VectorC (xyz)</div>
<div class="pc" style="left:113.3px;top:575.0px;letter-spacing:-0.12px">0.000000 0.000000 46.152828</div>
<div class="pc" style="left:13.4px;top:605.0px;letter-spacing:0.14px">VectorC(L)(xyz)</div>
<div class="pc" style="left:113.3px;top:605.0px;letter-spacing:-0.13px">0.000000 0.000000 5.627880</div>
<div class="pc" style="left:13.4px;top:635.0px;letter-spacing:0.10px">VectorC(R)(xyz)</div>
<div class="pc" style="left:113.3px;top:635.0px;letter-spacing:-0.13px">0.000000 0.000000 9.405792</div>
<div class="pc" style="left:13.4px;top:658.0px;letter-spacing:-0.25px">Total Num of</div>
<div class="pc" style="left:13.4px;top:671.6px;letter-spacing:-0.06px">Atoms:</div>
<div class="pc" style="left:13.4px;top:687.5px;letter-spacing:0.02px">Center Area of</div>
<div class="pc" style="left:13.4px;top:701.5px;letter-spacing:-0.20px">Lattice:</div>
<div class="pc" style="left:113.3px;top:664.6px;letter-spacing:-0.48px">86</div>
<div class="pc" style="left:113.3px;top:694.6px;letter-spacing:-0.21px">834.296900</div>
<svg class="a" style="left:248px;top:466px" width="12" height="10"><path d="M2.5 3h8l-4 4.300z" fill="#a6a6a6"/></svg><!--PR1-->
<!-- viewport -->
<div class="a" style="left:267px;top:87px;width:1058px;height:428px;background:#000"></div>
<div class="a" style="left:267px;top:86px;width:1053px;height:432px;border:3px solid #ff3535;box-shadow:0 0 0 1px rgba(244,253,253,.85)"></div>
<!--VW0--><svg class="a" style="left:270px;top:89px" width="1048" height="427" viewBox="270 89 1048 427"><defs>
<radialGradient id="gZn" cx=".42" cy=".4" r=".62"><stop offset="0" stop-color="#a9aed0"/><stop offset=".45" stop-color="#7f84a8"/><stop offset=".85" stop-color="#54587a"/><stop offset="1" stop-color="#2c2e44"/></radialGradient>
<radialGradient id="gO" cx=".42" cy=".4" r=".62"><stop offset="0" stop-color="#ff5a5a"/><stop offset=".45" stop-color="#d81818"/><stop offset=".85" stop-color="#8e0808"/><stop offset="1" stop-color="#480303"/></radialGradient>
<radialGradient id="gMg" cx=".42" cy=".4" r=".62"><stop offset="0" stop-color="#b6ec50"/><stop offset=".45" stop-color="#84cc1c"/><stop offset=".85" stop-color="#558c0c"/><stop offset="1" stop-color="#2a4a04"/></radialGradient>
<radialGradient id="gSi" cx=".42" cy=".4" r=".62"><stop offset="0" stop-color="#aebcbc"/><stop offset=".45" stop-color="#829292"/><stop offset=".85" stop-color="#566464"/><stop offset="1" stop-color="#2a3434"/></radialGradient>
</defs><g fill="none" stroke-linecap="butt"><path d="M345.6 259.1L345.6 276.1" stroke="#dd0606" stroke-width="2.9"/><path d="M345.6 292.4L345.6 275.4" stroke="#71769e" stroke-width="2.9"/><path d="M331.0 303.0L331.0 320.1" stroke="#dd0606" stroke-width="2.9"/><path d="M331.0 336.5L331.0 319.4" stroke="#71769e" stroke-width="2.9"/><path d="M345.6 292.4L360.9 297.8" stroke="#71769e" stroke-width="2.9"/><path d="M331.0 303.0L315.7 297.6" stroke="#dd0606" stroke-width="2.9"/><path d="M345.6 259.1L360.9 253.7" stroke="#dd0606" stroke-width="2.9"/><path d="M331.0 336.5L315.7 341.9" stroke="#71769e" stroke-width="2.9"/><path d="M390.1 259.1L390.1 276.1" stroke="#dd0606" stroke-width="2.9"/><path d="M390.1 292.4L390.1 275.4" stroke="#71769e" stroke-width="2.9"/><path d="M375.4 303.0L375.4 320.1" stroke="#dd0606" stroke-width="2.9"/><path d="M375.4 336.5L375.4 319.4" stroke="#71769e" stroke-width="2.9"/><path d="M390.1 292.4L405.4 297.8" stroke="#71769e" stroke-width="2.9"/><path d="M375.4 303.0L360.1 297.6" stroke="#dd0606" stroke-width="2.9"/><path d="M390.1 259.1L405.4 253.7" stroke="#dd0606" stroke-width="2.9"/><path d="M375.4 336.5L360.1 341.9" stroke="#71769e" stroke-width="2.9"/><path d="M434.5 259.1L434.5 276.1" stroke="#dd0606" stroke-width="2.9"/><path d="M434.5 292.4L434.5 275.4" stroke="#71769e" stroke-width="2.9"/><path d="M419.9 303.0L419.9 320.1" stroke="#dd0606" stroke-width="2.9"/><path d="M419.9 336.5L419.9 319.4" stroke="#71769e" stroke-width="2.9"/><path d="M434.5 292.4L449.8 297.8" stroke="#71769e" stroke-width="2.9"/><path d="M419.9 303.0L404.6 297.6" stroke="#dd0606" stroke-width="2.9"/><path d="M434.5 259.1L449.8 253.7" stroke="#dd0606" stroke-width="2.9"/><path d="M419.9 336.5L404.6 341.9" stroke="#71769e" stroke-width="2.9"/><path d="M479.0 259.1L479.0 276.1" stroke="#dd0606" stroke-width="2.9"/><path d="M479.0 292.4L479.0 275.4" stroke="#71769e" stroke-width="2.9"/><path d="M464.4 303.0L464.4 320.1" stroke="#dd0606" stroke-width="2.9"/><path d="M464.4 336.5L464.4 319.4" stroke="#71769e" stroke-width="2.9"/><path d="M479.0 292.4L494.3 297.8" stroke="#71769e" stroke-width="2.9"/><path d="M464.4 303.0L449.0 297.6" stroke="#dd0606" stroke-width="2.9"/><path d="M479.0 259.1L494.3 253.7" stroke="#dd0606" stroke-width="2.9"/><path d="M464.4 336.5L449.0 341.9" stroke="#71769e" stroke-width="2.9"/><path d="M523.4 259.1L523.4 276.1" stroke="#dd0606" stroke-width="2.9"/><path d="M523.4 292.4L523.4 275.4" stroke="#71769e" stroke-width="2.9"/><path d="M508.8 303.0L508.8 320.1" stroke="#dd0606" stroke-width="2.9"/><path d="M508.8 336.5L508.8 319.4" stroke="#71769e" stroke-width="2.9"/><path d="M523.4 292.4L538.7 297.8" stroke="#71769e" stroke-width="2.9"/><path d="M508.8 303.0L493.5 297.6" stroke="#dd0606" stroke-width="2.9"/><path d="M523.4 259.1L538.7 253.7" stroke="#dd0606" stroke-width="2.9"/><path d="M508.8 336.5L493.5 341.9" stroke="#71769e" stroke-width="2.9"/><path d="M567.9 259.1L567.9 276.1" stroke="#dd0606" stroke-width="2.9"/><path d="M567.9 292.4L567.9 275.4" stroke="#71769e" stroke-width="2.9"/><path d="M553.2 303.0L553.2 320.1" stroke="#dd0606" stroke-width="2.9"/><path d="M553.2 336.5L553.2 319.4" stroke="#71769e" stroke-width="2.9"/><path d="M553.2 303.0L537.9 297.6" stroke="#dd0606" stroke-width="2.9"/><path d="M553.2 336.5L537.9 341.9" stroke="#71769e" stroke-width="2.9"/><path d="M567.9 292.4L583.5 296.0" stroke="#71769e" stroke-width="2.9"/><path d="M598.4 299.4L582.7 295.8" stroke="#dd0606" stroke-width="2.9"/><path d="M598.4 299.4L608.3 314.4" stroke="#dd0606" stroke-width="2.9"/><path d="M617.7 328.6L627.5 343.6" stroke="#6cc40e" stroke-width="2.5"/><path d="M617.7 328.6L607.8 313.7" stroke="#6cc40e" stroke-width="2.5"/><path d="M636.9 270.1L646.8 285.1" stroke="#dd0606" stroke-width="2.9"/><path d="M636.9 270.1L627.1 255.1" stroke="#dd0606" stroke-width="2.9"/><path d="M656.2 299.3L666.1 314.3" stroke="#6cc40e" stroke-width="2.5"/><path d="M656.2 299.3L646.4 284.4" stroke="#6cc40e" stroke-width="2.5"/><path d="M675.5 328.6L685.3 343.6" stroke="#dd0606" stroke-width="2.9"/><path d="M675.5 328.6L665.6 313.6" stroke="#dd0606" stroke-width="2.9"/><path d="M694.8 270.0L704.6 285.0" stroke="#6cc40e" stroke-width="2.5"/><path d="M694.8 270.0L684.9 255.1" stroke="#6cc40e" stroke-width="2.5"/><path d="M714.0 299.3L723.9 314.3" stroke="#dd0606" stroke-width="2.9"/><path d="M714.0 299.3L704.2 284.3" stroke="#dd0606" stroke-width="2.9"/><path d="M733.3 328.5L743.1 343.5" stroke="#6cc40e" stroke-width="2.5"/><path d="M733.3 328.5L723.4 313.6" stroke="#6cc40e" stroke-width="2.5"/><path d="M752.6 270.0L762.4 285.0" stroke="#dd0606" stroke-width="2.9"/><path d="M752.6 270.0L742.7 255.0" stroke="#dd0606" stroke-width="2.9"/><path d="M771.8 299.2L781.7 314.2" stroke="#6cc40e" stroke-width="2.5"/><path d="M771.8 299.2L762.0 284.3" stroke="#6cc40e" stroke-width="2.5"/><path d="M791.1 328.5L801.0 343.5" stroke="#dd0606" stroke-width="2.9"/><path d="M791.1 328.5L781.2 313.5" stroke="#dd0606" stroke-width="2.9"/><path d="M810.4 269.9L820.2 284.9" stroke="#6cc40e" stroke-width="2.5"/><path d="M810.4 269.9L800.5 255.0" stroke="#6cc40e" stroke-width="2.5"/><path d="M829.6 299.2L839.5 314.2" stroke="#dd0606" stroke-width="2.9"/><path d="M829.6 299.2L819.8 284.2" stroke="#dd0606" stroke-width="2.9"/><path d="M848.9 328.4L858.8 343.4" stroke="#6cc40e" stroke-width="2.5"/><path d="M848.9 328.4L839.1 313.5" stroke="#6cc40e" stroke-width="2.5"/><path d="M868.2 269.9L878.0 284.9" stroke="#dd0606" stroke-width="2.9"/><path d="M868.2 269.9L858.3 254.9" stroke="#dd0606" stroke-width="2.9"/><path d="M887.5 299.1L897.3 314.1" stroke="#6cc40e" stroke-width="2.5"/><path d="M887.5 299.1L877.6 284.2" stroke="#6cc40e" stroke-width="2.5"/><path d="M906.7 328.4L896.9 313.4" stroke="#dd0606" stroke-width="2.9"/><path d="M955.3 270.2L961.6 255.2" stroke="#6c8080" stroke-width="2.5"/><path d="M967.6 284.8L961.3 299.9" stroke="#6c8080" stroke-width="2.5"/><path d="M967.6 284.8L986.7 284.8" stroke="#6c8080" stroke-width="2.5"/><path d="M955.3 314.1L961.6 299.1" stroke="#6c8080" stroke-width="2.5"/><path d="M967.6 328.8L961.3 343.8" stroke="#6c8080" stroke-width="2.5"/><path d="M967.6 328.8L986.7 328.8" stroke="#6c8080" stroke-width="2.5"/><path d="M1017.2 255.5L1010.9 270.6" stroke="#6c8080" stroke-width="2.5"/><path d="M1017.2 255.5L1036.3 255.5" stroke="#6c8080" stroke-width="2.5"/><path d="M1004.9 284.8L1011.3 269.8" stroke="#6c8080" stroke-width="2.5"/><path d="M1004.9 284.8L985.9 284.8" stroke="#6c8080" stroke-width="2.5"/><path d="M1017.2 299.5L1010.9 314.5" stroke="#6c8080" stroke-width="2.5"/><path d="M1017.2 299.5L1036.3 299.5" stroke="#6c8080" stroke-width="2.5"/><path d="M1004.9 328.8L1011.3 313.8" stroke="#6c8080" stroke-width="2.5"/><path d="M1004.9 328.8L985.9 328.8" stroke="#6c8080" stroke-width="2.5"/><path d="M1054.6 255.6L1060.9 240.5" stroke="#6c8080" stroke-width="2.5"/><path d="M1054.6 255.6L1035.5 255.6" stroke="#6c8080" stroke-width="2.5"/><path d="M1066.9 270.2L1060.6 285.2" stroke="#6c8080" stroke-width="2.5"/><path d="M1066.9 270.2L1086.0 270.2" stroke="#6c8080" stroke-width="2.5"/><path d="M1054.6 299.5L1060.9 284.5" stroke="#6c8080" stroke-width="2.5"/><path d="M1054.6 299.5L1035.5 299.5" stroke="#6c8080" stroke-width="2.5"/><path d="M1066.9 314.1L1060.6 329.2" stroke="#6c8080" stroke-width="2.5"/><path d="M1066.9 314.1L1086.0 314.1" stroke="#6c8080" stroke-width="2.5"/><path d="M1104.2 270.2L1110.6 255.2" stroke="#6c8080" stroke-width="2.5"/><path d="M1104.2 270.2L1085.2 270.2" stroke="#6c8080" stroke-width="2.5"/><path d="M1116.5 284.8L1110.2 299.9" stroke="#6c8080" stroke-width="2.5"/><path d="M1116.5 284.8L1135.6 284.8" stroke="#6c8080" stroke-width="2.5"/><path d="M1104.2 314.1L1110.6 299.1" stroke="#6c8080" stroke-width="2.5"/><path d="M1104.2 314.1L1085.2 314.1" stroke="#6c8080" stroke-width="2.5"/><path d="M1116.5 328.8L1110.2 343.8" stroke="#6c8080" stroke-width="2.5"/><path d="M1116.5 328.8L1135.6 328.8" stroke="#6c8080" stroke-width="2.5"/><path d="M1166.2 255.5L1159.9 270.6" stroke="#6c8080" stroke-width="2.5"/><path d="M1166.2 255.5L1185.3 255.5" stroke="#6c8080" stroke-width="2.5"/><path d="M1153.9 284.8L1160.2 269.8" stroke="#6c8080" stroke-width="2.5"/><path d="M1153.9 284.8L1134.8 284.8" stroke="#6c8080" stroke-width="2.5"/><path d="M1166.2 299.5L1159.9 314.5" stroke="#6c8080" stroke-width="2.5"/><path d="M1166.2 299.5L1185.3 299.5" stroke="#6c8080" stroke-width="2.5"/><path d="M1153.9 328.8L1160.2 313.8" stroke="#6c8080" stroke-width="2.5"/><path d="M1153.9 328.8L1134.8 328.8" stroke="#6c8080" stroke-width="2.5"/><path d="M1203.5 255.6L1209.9 240.5" stroke="#6c8080" stroke-width="2.5"/><path d="M1203.5 255.6L1184.5 255.6" stroke="#6c8080" stroke-width="2.5"/><path d="M1215.8 270.2L1209.5 285.2" stroke="#6c8080" stroke-width="2.5"/><path d="M1215.8 270.2L1234.9 270.2" stroke="#6c8080" stroke-width="2.5"/><path d="M1203.5 299.5L1209.9 284.5" stroke="#6c8080" stroke-width="2.5"/><path d="M1203.5 299.5L1184.5 299.5" stroke="#6c8080" stroke-width="2.5"/><path d="M1215.8 314.1L1209.5 329.2" stroke="#6c8080" stroke-width="2.5"/><path d="M1215.8 314.1L1234.9 314.1" stroke="#6c8080" stroke-width="2.5"/><path d="M1253.2 270.2L1259.5 255.2" stroke="#6c8080" stroke-width="2.5"/><path d="M1253.2 270.2L1234.1 270.2" stroke="#6c8080" stroke-width="2.5"/><path d="M1265.5 284.8L1259.2 299.9" stroke="#6c8080" stroke-width="2.5"/><path d="M1265.5 284.8L1284.6 284.8" stroke="#6c8080" stroke-width="2.5"/><path d="M1253.2 314.1L1259.5 299.1" stroke="#6c8080" stroke-width="2.5"/><path d="M1253.2 314.1L1234.1 314.1" stroke="#6c8080" stroke-width="2.5"/><path d="M1265.5 328.8L1259.2 343.8" stroke="#6c8080" stroke-width="2.5"/><path d="M1265.5 328.8L1284.6 328.8" stroke="#6c8080" stroke-width="2.5"/><path d="M617.7 328.6L637.3 313.8" stroke="#6cc40e" stroke-width="2.5"/><path d="M656.2 299.3L675.8 284.5" stroke="#6cc40e" stroke-width="2.5"/><path d="M656.2 299.3L636.6 314.2" stroke="#6cc40e" stroke-width="2.5"/><path d="M694.8 270.0L714.3 255.2" stroke="#6cc40e" stroke-width="2.5"/><path d="M694.8 270.0L675.2 284.9" stroke="#6cc40e" stroke-width="2.5"/><path d="M733.3 328.5L752.9 313.7" stroke="#6cc40e" stroke-width="2.5"/><path d="M733.3 328.5L713.7 343.4" stroke="#6cc40e" stroke-width="2.5"/><path d="M771.8 299.2L791.4 284.4" stroke="#6cc40e" stroke-width="2.5"/><path d="M771.8 299.2L752.2 314.1" stroke="#6cc40e" stroke-width="2.5"/><path d="M810.4 269.9L830.0 255.1" stroke="#6cc40e" stroke-width="2.5"/><path d="M810.4 269.9L790.8 284.8" stroke="#6cc40e" stroke-width="2.5"/><path d="M848.9 328.4L868.5 313.6" stroke="#6cc40e" stroke-width="2.5"/><path d="M848.9 328.4L829.3 343.3" stroke="#6cc40e" stroke-width="2.5"/><path d="M887.5 299.1L867.9 314.0" stroke="#6cc40e" stroke-width="2.5"/><circle cx="345.6" cy="259.1" r="6.4" fill="url(#gO)"/><ellipse cx="345.2" cy="258.7" rx="2.2" ry="0.9" transform="rotate(35 345.2 258.7)" fill="#fff" opacity=".88"/><circle cx="345.6" cy="292.4" r="8.8" fill="url(#gZn)"/><ellipse cx="345.2" cy="292.0" rx="2.2" ry="0.9" transform="rotate(35 345.2 292.0)" fill="#fff" opacity=".88"/><circle cx="331.0" cy="303.0" r="6.4" fill="url(#gO)"/><ellipse cx="330.6" cy="302.6" rx="2.2" ry="0.9" transform="rotate(35 330.6 302.6)" fill="#fff" opacity=".88"/><circle cx="331.0" cy="336.5" r="8.8" fill="url(#gZn)"/><ellipse cx="330.6" cy="336.1" rx="2.2" ry="0.9" transform="rotate(35 330.6 336.1)" fill="#fff" opacity=".88"/><circle cx="390.1" cy="259.1" r="6.4" fill="url(#gO)"/><ellipse cx="389.7" cy="258.7" rx="2.2" ry="0.9" transform="rotate(35 389.7 258.7)" fill="#fff" opacity=".88"/><circle cx="390.1" cy="292.4" r="8.8" fill="url(#gZn)"/><ellipse cx="389.7" cy="292.0" rx="2.2" ry="0.9" transform="rotate(35 389.7 292.0)" fill="#fff" opacity=".88"/><circle cx="375.4" cy="303.0" r="6.4" fill="url(#gO)"/><ellipse cx="375.1" cy="302.6" rx="2.2" ry="0.9" transform="rotate(35 375.1 302.6)" fill="#fff" opacity=".88"/><circle cx="375.4" cy="336.5" r="8.8" fill="url(#gZn)"/><ellipse cx="375.1" cy="336.1" rx="2.2" ry="0.9" transform="rotate(35 375.1 336.1)" fill="#fff" opacity=".88"/><circle cx="434.5" cy="259.1" r="6.4" fill="url(#gO)"/><ellipse cx="434.1" cy="258.7" rx="2.2" ry="0.9" transform="rotate(35 434.1 258.7)" fill="#fff" opacity=".88"/><circle cx="434.5" cy="292.4" r="8.8" fill="url(#gZn)"/><ellipse cx="434.1" cy="292.0" rx="2.2" ry="0.9" transform="rotate(35 434.1 292.0)" fill="#fff" opacity=".88"/><circle cx="419.9" cy="303.0" r="6.4" fill="url(#gO)"/><ellipse cx="419.5" cy="302.6" rx="2.2" ry="0.9" transform="rotate(35 419.5 302.6)" fill="#fff" opacity=".88"/><circle cx="419.9" cy="336.5" r="8.8" fill="url(#gZn)"/><ellipse cx="419.5" cy="336.1" rx="2.2" ry="0.9" transform="rotate(35 419.5 336.1)" fill="#fff" opacity=".88"/><circle cx="479.0" cy="259.1" r="6.4" fill="url(#gO)"/><ellipse cx="478.6" cy="258.7" rx="2.2" ry="0.9" transform="rotate(35 478.6 258.7)" fill="#fff" opacity=".88"/><circle cx="479.0" cy="292.4" r="8.8" fill="url(#gZn)"/><ellipse cx="478.6" cy="292.0" rx="2.2" ry="0.9" transform="rotate(35 478.6 292.0)" fill="#fff" opacity=".88"/><circle cx="464.4" cy="303.0" r="6.4" fill="url(#gO)"/><ellipse cx="464.0" cy="302.6" rx="2.2" ry="0.9" transform="rotate(35 464.0 302.6)" fill="#fff" opacity=".88"/><circle cx="464.4" cy="336.5" r="8.8" fill="url(#gZn)"/><ellipse cx="464.0" cy="336.1" rx="2.2" ry="0.9" transform="rotate(35 464.0 336.1)" fill="#fff" opacity=".88"/><circle cx="523.4" cy="259.1" r="6.4" fill="url(#gO)"/><ellipse cx="523.0" cy="258.7" rx="2.2" ry="0.9" transform="rotate(35 523.0 258.7)" fill="#fff" opacity=".88"/><circle cx="523.4" cy="292.4" r="8.8" fill="url(#gZn)"/><ellipse cx="523.0" cy="292.0" rx="2.2" ry="0.9" transform="rotate(35 523.0 292.0)" fill="#fff" opacity=".88"/><circle cx="508.8" cy="303.0" r="6.4" fill="url(#gO)"/><ellipse cx="508.4" cy="302.6" rx="2.2" ry="0.9" transform="rotate(35 508.4 302.6)" fill="#fff" opacity=".88"/><circle cx="508.8" cy="336.5" r="8.8" fill="url(#gZn)"/><ellipse cx="508.4" cy="336.1" rx="2.2" ry="0.9" transform="rotate(35 508.4 336.1)" fill="#fff" opacity=".88"/><circle cx="567.9" cy="259.1" r="6.4" fill="url(#gO)"/><ellipse cx="567.5" cy="258.7" rx="2.2" ry="0.9" transform="rotate(35 567.5 258.7)" fill="#fff" opacity=".88"/><circle cx="567.9" cy="292.4" r="8.8" fill="url(#gZn)"/><ellipse cx="567.5" cy="292.0" rx="2.2" ry="0.9" transform="rotate(35 567.5 292.0)" fill="#fff" opacity=".88"/><circle cx="553.2" cy="303.0" r="6.4" fill="url(#gO)"/><ellipse cx="552.9" cy="302.6" rx="2.2" ry="0.9" transform="rotate(35 552.9 302.6)" fill="#fff" opacity=".88"/><circle cx="553.2" cy="336.5" r="8.8" fill="url(#gZn)"/><ellipse cx="552.9" cy="336.1" rx="2.2" ry="0.9" transform="rotate(35 552.9 336.1)" fill="#fff" opacity=".88"/><circle cx="598.4" cy="299.4" r="6.4" fill="url(#gO)"/><ellipse cx="598.0" cy="299.0" rx="2.2" ry="0.9" transform="rotate(35 598.0 299.0)" fill="#fff" opacity=".88"/><circle cx="617.7" cy="328.6" r="8.8" fill="url(#gMg)"/><ellipse cx="617.3" cy="328.2" rx="2.2" ry="0.9" transform="rotate(35 617.3 328.2)" fill="#fff" opacity=".88"/><circle cx="636.9" cy="270.1" r="6.4" fill="url(#gO)"/><ellipse cx="636.5" cy="269.7" rx="2.2" ry="0.9" transform="rotate(35 636.5 269.7)" fill="#fff" opacity=".88"/><circle cx="656.2" cy="299.3" r="8.8" fill="url(#gMg)"/><ellipse cx="655.8" cy="298.9" rx="2.2" ry="0.9" transform="rotate(35 655.8 298.9)" fill="#fff" opacity=".88"/><circle cx="675.5" cy="328.6" r="6.4" fill="url(#gO)"/><ellipse cx="675.1" cy="328.2" rx="2.2" ry="0.9" transform="rotate(35 675.1 328.2)" fill="#fff" opacity=".88"/><circle cx="694.8" cy="270.0" r="8.8" fill="url(#gMg)"/><ellipse cx="694.4" cy="269.6" rx="2.2" ry="0.9" transform="rotate(35 694.4 269.6)" fill="#fff" opacity=".88"/><circle cx="714.0" cy="299.3" r="6.4" fill="url(#gO)"/><ellipse cx="713.6" cy="298.9" rx="2.2" ry="0.9" transform="rotate(35 713.6 298.9)" fill="#fff" opacity=".88"/><circle cx="733.3" cy="328.5" r="8.8" fill="url(#gMg)"/><ellipse cx="732.9" cy="328.1" rx="2.2" ry="0.9" transform="rotate(35 732.9 328.1)" fill="#fff" opacity=".88"/><circle cx="752.6" cy="270.0" r="6.4" fill="url(#gO)"/><ellipse cx="752.2" cy="269.6" rx="2.2" ry="0.9" transform="rotate(35 752.2 269.6)" fill="#fff" opacity=".88"/><circle cx="771.8" cy="299.2" r="8.8" fill="url(#gMg)"/><ellipse cx="771.4" cy="298.9" rx="2.2" ry="0.9" transform="rotate(35 771.4 298.9)" fill="#fff" opacity=".88"/><circle cx="791.1" cy="328.5" r="6.4" fill="url(#gO)"/><ellipse cx="790.7" cy="328.1" rx="2.2" ry="0.9" transform="rotate(35 790.7 328.1)" fill="#fff" opacity=".88"/><circle cx="810.4" cy="269.9" r="8.8" fill="url(#gMg)"/><ellipse cx="810.0" cy="269.5" rx="2.2" ry="0.9" transform="rotate(35 810.0 269.5)" fill="#fff" opacity=".88"/><circle cx="829.6" cy="299.2" r="6.4" fill="url(#gO)"/><ellipse cx="829.2" cy="298.8" rx="2.2" ry="0.9" transform="rotate(35 829.2 298.8)" fill="#fff" opacity=".88"/><circle cx="848.9" cy="328.4" r="8.8" fill="url(#gMg)"/><ellipse cx="848.5" cy="328.0" rx="2.2" ry="0.9" transform="rotate(35 848.5 328.0)" fill="#fff" opacity=".88"/><circle cx="868.2" cy="269.9" r="6.4" fill="url(#gO)"/><ellipse cx="867.8" cy="269.5" rx="2.2" ry="0.9" transform="rotate(35 867.8 269.5)" fill="#fff" opacity=".88"/><circle cx="887.5" cy="299.1" r="8.8" fill="url(#gMg)"/><ellipse cx="887.1" cy="298.8" rx="2.2" ry="0.9" transform="rotate(35 887.1 298.8)" fill="#fff" opacity=".88"/><circle cx="906.7" cy="328.4" r="6.4" fill="url(#gO)"/><ellipse cx="906.3" cy="328.0" rx="2.2" ry="0.9" transform="rotate(35 906.3 328.0)" fill="#fff" opacity=".88"/><circle cx="955.3" cy="270.2" r="8.6" fill="url(#gSi)"/><ellipse cx="954.9" cy="269.8" rx="2.2" ry="0.9" transform="rotate(35 954.9 269.8)" fill="#fff" opacity=".88"/><circle cx="967.6" cy="284.8" r="8.6" fill="url(#gSi)"/><ellipse cx="967.2" cy="284.4" rx="2.2" ry="0.9" transform="rotate(35 967.2 284.4)" fill="#fff" opacity=".88"/><circle cx="955.3" cy="314.1" r="8.6" fill="url(#gSi)"/><ellipse cx="954.9" cy="313.8" rx="2.2" ry="0.9" transform="rotate(35 954.9 313.8)" fill="#fff" opacity=".88"/><circle cx="967.6" cy="328.8" r="8.6" fill="url(#gSi)"/><ellipse cx="967.2" cy="328.4" rx="2.2" ry="0.9" transform="rotate(35 967.2 328.4)" fill="#fff" opacity=".88"/><circle cx="1017.2" cy="255.5" r="8.6" fill="url(#gSi)"/><ellipse cx="1016.8" cy="255.1" rx="2.2" ry="0.9" transform="rotate(35 1016.8 255.1)" fill="#fff" opacity=".88"/><circle cx="1004.9" cy="284.8" r="8.6" fill="url(#gSi)"/><ellipse cx="1004.5" cy="284.4" rx="2.2" ry="0.9" transform="rotate(35 1004.5 284.4)" fill="#fff" opacity=".88"/><circle cx="1017.2" cy="299.5" r="8.6" fill="url(#gSi)"/><ellipse cx="1016.8" cy="299.1" rx="2.2" ry="0.9" transform="rotate(35 1016.8 299.1)" fill="#fff" opacity=".88"/><circle cx="1004.9" cy="328.8" r="8.6" fill="url(#gSi)"/><ellipse cx="1004.5" cy="328.4" rx="2.2" ry="0.9" transform="rotate(35 1004.5 328.4)" fill="#fff" opacity=".88"/><circle cx="1054.6" cy="255.6" r="8.6" fill="url(#gSi)"/><ellipse cx="1054.2" cy="255.2" rx="2.2" ry="0.9" transform="rotate(35 1054.2 255.2)" fill="#fff" opacity=".88"/><circle cx="1066.9" cy="270.2" r="8.6" fill="url(#gSi)"/><ellipse cx="1066.5" cy="269.8" rx="2.2" ry="0.9" transform="rotate(35 1066.5 269.8)" fill="#fff" opacity=".88"/><circle cx="1054.6" cy="299.5" r="8.6" fill="url(#gSi)"/><ellipse cx="1054.2" cy="299.1" rx="2.2" ry="0.9" transform="rotate(35 1054.2 299.1)" fill="#fff" opacity=".88"/><circle cx="1066.9" cy="314.1" r="8.6" fill="url(#gSi)"/><ellipse cx="1066.5" cy="313.8" rx="2.2" ry="0.9" transform="rotate(35 1066.5 313.8)" fill="#fff" opacity=".88"/><circle cx="1104.2" cy="270.2" r="8.6" fill="url(#gSi)"/><ellipse cx="1103.8" cy="269.8" rx="2.2" ry="0.9" transform="rotate(35 1103.8 269.8)" fill="#fff" opacity=".88"/><circle cx="1116.5" cy="284.8" r="8.6" fill="url(#gSi)"/><ellipse cx="1116.1" cy="284.4" rx="2.2" ry="0.9" transform="rotate(35 1116.1 284.4)" fill="#fff" opacity=".88"/><circle cx="1104.2" cy="314.1" r="8.6" fill="url(#gSi)"/><ellipse cx="1103.8" cy="313.8" rx="2.2" ry="0.9" transform="rotate(35 1103.8 313.8)" fill="#fff" opacity=".88"/><circle cx="1116.5" cy="328.8" r="8.6" fill="url(#gSi)"/><ellipse cx="1116.1" cy="328.4" rx="2.2" ry="0.9" transform="rotate(35 1116.1 328.4)" fill="#fff" opacity=".88"/><circle cx="1166.2" cy="255.5" r="8.6" fill="url(#gSi)"/><ellipse cx="1165.8" cy="255.1" rx="2.2" ry="0.9" transform="rotate(35 1165.8 255.1)" fill="#fff" opacity=".88"/><circle cx="1153.9" cy="284.8" r="8.6" fill="url(#gSi)"/><ellipse cx="1153.5" cy="284.4" rx="2.2" ry="0.9" transform="rotate(35 1153.5 284.4)" fill="#fff" opacity=".88"/><circle cx="1166.2" cy="299.5" r="8.6" fill="url(#gSi)"/><ellipse cx="1165.8" cy="299.1" rx="2.2" ry="0.9" transform="rotate(35 1165.8 299.1)" fill="#fff" opacity=".88"/><circle cx="1153.9" cy="328.8" r="8.6" fill="url(#gSi)"/><ellipse cx="1153.5" cy="328.4" rx="2.2" ry="0.9" transform="rotate(35 1153.5 328.4)" fill="#fff" opacity=".88"/><circle cx="1203.5" cy="255.6" r="8.6" fill="url(#gSi)"/><ellipse cx="1203.1" cy="255.2" rx="2.2" ry="0.9" transform="rotate(35 1203.1 255.2)" fill="#fff" opacity=".88"/><circle cx="1215.8" cy="270.2" r="8.6" fill="url(#gSi)"/><ellipse cx="1215.4" cy="269.8" rx="2.2" ry="0.9" transform="rotate(35 1215.4 269.8)" fill="#fff" opacity=".88"/><circle cx="1203.5" cy="299.5" r="8.6" fill="url(#gSi)"/><ellipse cx="1203.1" cy="299.1" rx="2.2" ry="0.9" transform="rotate(35 1203.1 299.1)" fill="#fff" opacity=".88"/><circle cx="1215.8" cy="314.1" r="8.6" fill="url(#gSi)"/><ellipse cx="1215.4" cy="313.8" rx="2.2" ry="0.9" transform="rotate(35 1215.4 313.8)" fill="#fff" opacity=".88"/><circle cx="1253.2" cy="270.2" r="8.6" fill="url(#gSi)"/><ellipse cx="1252.8" cy="269.8" rx="2.2" ry="0.9" transform="rotate(35 1252.8 269.8)" fill="#fff" opacity=".88"/><circle cx="1265.5" cy="284.8" r="8.6" fill="url(#gSi)"/><ellipse cx="1265.1" cy="284.4" rx="2.2" ry="0.9" transform="rotate(35 1265.1 284.4)" fill="#fff" opacity=".88"/><circle cx="1253.2" cy="314.1" r="8.6" fill="url(#gSi)"/><ellipse cx="1252.8" cy="313.8" rx="2.2" ry="0.9" transform="rotate(35 1252.8 313.8)" fill="#fff" opacity=".88"/><circle cx="1265.5" cy="328.8" r="8.6" fill="url(#gSi)"/><ellipse cx="1265.1" cy="328.4" rx="2.2" ry="0.9" transform="rotate(35 1265.1 328.4)" fill="#fff" opacity=".88"/><path d="M601.8 296.8L608.4 291.8" stroke="#b00606" stroke-width="2.9"/><path d="M622.3 325.1L627.6 321.1" stroke="#64b80c" stroke-width="2.5"/><path d="M613.0 332.2L607.7 336.2" stroke="#64b80c" stroke-width="2.5"/><path d="M617.7 335.9L617.7 351.0" stroke="#6cc40e" stroke-width="2.5"/><path d="M617.7 321.4L617.7 306.3" stroke="#6cc40e" stroke-width="2.5"/><path d="M624.4 331.2L637.3 336.1" stroke="#6cc40e" stroke-width="2.5"/><path d="M640.3 267.5L646.9 262.5" stroke="#b00606" stroke-width="2.9"/><path d="M633.6 272.7L627.0 277.7" stroke="#b00606" stroke-width="2.9"/><path d="M660.8 295.8L666.2 291.8" stroke="#64b80c" stroke-width="2.5"/><path d="M651.6 302.9L646.3 306.9" stroke="#64b80c" stroke-width="2.5"/><path d="M656.2 306.6L656.2 321.7" stroke="#6cc40e" stroke-width="2.5"/><path d="M656.2 292.1L656.2 277.0" stroke="#6cc40e" stroke-width="2.5"/><path d="M663.0 301.9L675.9 306.8" stroke="#6cc40e" stroke-width="2.5"/><path d="M649.5 296.8L636.6 291.9" stroke="#6cc40e" stroke-width="2.5"/><path d="M678.8 326.0L685.4 321.0" stroke="#b00606" stroke-width="2.9"/><path d="M672.1 331.2L665.5 336.2" stroke="#b00606" stroke-width="2.9"/><path d="M699.4 266.5L704.7 262.5" stroke="#64b80c" stroke-width="2.5"/><path d="M690.1 273.6L684.8 277.6" stroke="#64b80c" stroke-width="2.5"/><path d="M694.8 277.3L694.8 292.4" stroke="#6cc40e" stroke-width="2.5"/><path d="M694.8 262.8L694.8 247.7" stroke="#6cc40e" stroke-width="2.5"/><path d="M701.5 272.6L714.4 277.5" stroke="#6cc40e" stroke-width="2.5"/><path d="M688.0 267.5L675.1 262.6" stroke="#6cc40e" stroke-width="2.5"/><path d="M717.4 296.7L724.0 291.7" stroke="#b00606" stroke-width="2.9"/><path d="M710.7 301.9L704.1 306.9" stroke="#b00606" stroke-width="2.9"/><path d="M737.9 325.0L743.2 321.0" stroke="#64b80c" stroke-width="2.5"/><path d="M728.7 332.1L723.3 336.1" stroke="#64b80c" stroke-width="2.5"/><path d="M733.3 335.8L733.3 350.9" stroke="#6cc40e" stroke-width="2.5"/><path d="M733.3 321.3L733.3 306.2" stroke="#6cc40e" stroke-width="2.5"/><path d="M740.0 331.1L752.9 336.0" stroke="#6cc40e" stroke-width="2.5"/><path d="M726.5 326.0L713.6 321.1" stroke="#6cc40e" stroke-width="2.5"/><path d="M755.9 267.4L762.5 262.4" stroke="#b00606" stroke-width="2.9"/><path d="M749.2 272.6L742.6 277.6" stroke="#b00606" stroke-width="2.9"/><path d="M776.5 295.7L781.8 291.7" stroke="#64b80c" stroke-width="2.5"/><path d="M767.2 302.8L761.9 306.8" stroke="#64b80c" stroke-width="2.5"/><path d="M771.8 306.5L771.8 321.6" stroke="#6cc40e" stroke-width="2.5"/><path d="M771.8 292.0L771.8 276.9" stroke="#6cc40e" stroke-width="2.5"/><path d="M778.6 301.8L791.5 306.7" stroke="#6cc40e" stroke-width="2.5"/><path d="M765.1 296.7L752.2 291.8" stroke="#6cc40e" stroke-width="2.5"/><path d="M794.5 325.9L801.1 320.9" stroke="#b00606" stroke-width="2.9"/><path d="M787.7 331.1L781.1 336.1" stroke="#b00606" stroke-width="2.9"/><path d="M815.0 266.4L820.3 262.4" stroke="#64b80c" stroke-width="2.5"/><path d="M805.7 273.5L800.4 277.5" stroke="#64b80c" stroke-width="2.5"/><path d="M810.4 277.2L810.4 292.3" stroke="#6cc40e" stroke-width="2.5"/><path d="M810.4 262.7L810.4 247.6" stroke="#6cc40e" stroke-width="2.5"/><path d="M817.1 272.5L830.0 277.4" stroke="#6cc40e" stroke-width="2.5"/><path d="M803.6 267.4L790.7 262.5" stroke="#6cc40e" stroke-width="2.5"/><path d="M833.0 296.6L839.6 291.6" stroke="#b00606" stroke-width="2.9"/><path d="M826.3 301.8L819.7 306.8" stroke="#b00606" stroke-width="2.9"/><path d="M853.5 324.9L858.9 320.9" stroke="#64b80c" stroke-width="2.5"/><path d="M844.3 332.0L839.0 336.0" stroke="#64b80c" stroke-width="2.5"/><path d="M848.9 335.7L848.9 350.8" stroke="#6cc40e" stroke-width="2.5"/><path d="M848.9 321.2L848.9 306.1" stroke="#6cc40e" stroke-width="2.5"/><path d="M855.7 331.0L868.6 335.9" stroke="#6cc40e" stroke-width="2.5"/><path d="M842.2 325.9L829.3 321.0" stroke="#6cc40e" stroke-width="2.5"/><path d="M871.5 267.3L878.1 262.3" stroke="#b00606" stroke-width="2.9"/><path d="M864.8 272.5L858.2 277.5" stroke="#b00606" stroke-width="2.9"/><path d="M892.1 295.6L897.4 291.6" stroke="#64b80c" stroke-width="2.5"/><path d="M882.8 302.7L877.5 306.7" stroke="#64b80c" stroke-width="2.5"/><path d="M887.5 306.4L887.5 321.5" stroke="#6cc40e" stroke-width="2.5"/><path d="M887.5 291.9L887.5 276.8" stroke="#6cc40e" stroke-width="2.5"/><path d="M880.7 296.6L867.8 291.7" stroke="#6cc40e" stroke-width="2.5"/><path d="M903.4 331.0L896.8 336.0" stroke="#b00606" stroke-width="2.9"/><path d="M598.4 343.3L608.3 358.3" stroke="#dd0606" stroke-width="2.9"/><path d="M617.7 284.8L627.5 299.7" stroke="#6cc40e" stroke-width="2.5"/><path d="M617.7 284.8L607.8 269.8" stroke="#6cc40e" stroke-width="2.5"/><path d="M636.9 314.0L646.8 329.0" stroke="#dd0606" stroke-width="2.9"/><path d="M636.9 314.0L627.1 299.0" stroke="#dd0606" stroke-width="2.9"/><path d="M656.2 343.2L666.1 358.2" stroke="#6cc40e" stroke-width="2.5"/><path d="M656.2 343.2L646.4 328.3" stroke="#6cc40e" stroke-width="2.5"/><path d="M675.5 284.7L685.3 299.7" stroke="#dd0606" stroke-width="2.9"/><path d="M675.5 284.7L665.6 269.7" stroke="#dd0606" stroke-width="2.9"/><path d="M694.8 313.9L704.6 328.9" stroke="#6cc40e" stroke-width="2.5"/><path d="M694.8 313.9L684.9 299.0" stroke="#6cc40e" stroke-width="2.5"/><path d="M714.0 343.2L723.9 358.2" stroke="#dd0606" stroke-width="2.9"/><path d="M714.0 343.2L704.2 328.2" stroke="#dd0606" stroke-width="2.9"/><path d="M733.3 284.6L743.1 299.6" stroke="#6cc40e" stroke-width="2.5"/><path d="M733.3 284.6L723.4 269.7" stroke="#6cc40e" stroke-width="2.5"/><path d="M752.6 313.9L762.4 328.9" stroke="#dd0606" stroke-width="2.9"/><path d="M752.6 313.9L742.7 298.9" stroke="#dd0606" stroke-width="2.9"/><path d="M771.8 343.1L781.7 358.1" stroke="#6cc40e" stroke-width="2.5"/><path d="M771.8 343.1L762.0 328.2" stroke="#6cc40e" stroke-width="2.5"/><path d="M791.1 284.6L801.0 299.6" stroke="#dd0606" stroke-width="2.9"/><path d="M791.1 284.6L781.2 269.6" stroke="#dd0606" stroke-width="2.9"/><path d="M810.4 313.8L820.2 328.8" stroke="#6cc40e" stroke-width="2.5"/><path d="M810.4 313.8L800.5 298.9" stroke="#6cc40e" stroke-width="2.5"/><path d="M829.6 343.1L839.5 358.1" stroke="#dd0606" stroke-width="2.9"/><path d="M829.6 343.1L819.8 328.1" stroke="#dd0606" stroke-width="2.9"/><path d="M848.9 284.5L858.8 299.5" stroke="#6cc40e" stroke-width="2.5"/><path d="M848.9 284.5L839.1 269.6" stroke="#6cc40e" stroke-width="2.5"/><path d="M868.2 313.8L878.0 328.8" stroke="#dd0606" stroke-width="2.9"/><path d="M868.2 313.8L858.3 298.8" stroke="#dd0606" stroke-width="2.9"/><path d="M887.5 343.0L897.3 358.0" stroke="#6cc40e" stroke-width="2.5"/><path d="M887.5 343.0L877.6 328.1" stroke="#6cc40e" stroke-width="2.5"/><path d="M906.7 284.5L896.9 269.5" stroke="#dd0606" stroke-width="2.9"/><path d="M617.7 284.8L637.3 269.9" stroke="#6cc40e" stroke-width="2.5"/><path d="M656.2 343.2L675.8 328.4" stroke="#6cc40e" stroke-width="2.5"/><path d="M656.2 343.2L636.6 358.1" stroke="#6cc40e" stroke-width="2.5"/><path d="M694.8 313.9L714.3 299.1" stroke="#6cc40e" stroke-width="2.5"/><path d="M694.8 313.9L675.2 328.8" stroke="#6cc40e" stroke-width="2.5"/><path d="M733.3 284.6L752.9 269.8" stroke="#6cc40e" stroke-width="2.5"/><path d="M733.3 284.6L713.7 299.5" stroke="#6cc40e" stroke-width="2.5"/><path d="M771.8 343.1L791.4 328.3" stroke="#6cc40e" stroke-width="2.5"/><path d="M771.8 343.1L752.2 358.0" stroke="#6cc40e" stroke-width="2.5"/><path d="M810.4 313.8L830.0 299.0" stroke="#6cc40e" stroke-width="2.5"/><path d="M810.4 313.8L790.8 328.7" stroke="#6cc40e" stroke-width="2.5"/><path d="M848.9 284.5L868.5 269.7" stroke="#6cc40e" stroke-width="2.5"/><path d="M848.9 284.5L829.3 299.4" stroke="#6cc40e" stroke-width="2.5"/><path d="M887.5 343.0L867.9 357.9" stroke="#6cc40e" stroke-width="2.5"/><g fill="none" stroke="#fff" stroke-width="1.2"><rect x="316.5" y="255.4" width="968" height="88"/><path d="M405.5 255.4v88M1135.4 255.4v88"/></g><path d="M342.1 294.9L338.0 297.9" stroke="#34374c" stroke-width="3"/><path d="M332.9 301.6L338.6 297.5" stroke="#7c0606" stroke-width="3"/><path d="M343.7 257.7L338.0 253.6" stroke="#7c0606" stroke-width="3"/><path d="M334.5 339.0L338.6 342.0" stroke="#34374c" stroke-width="3"/><path d="M386.6 294.9L382.4 297.9" stroke="#34374c" stroke-width="3"/><path d="M377.4 301.6L383.1 297.5" stroke="#7c0606" stroke-width="3"/><path d="M388.1 257.7L382.4 253.6" stroke="#7c0606" stroke-width="3"/><path d="M378.9 339.0L383.1 342.0" stroke="#34374c" stroke-width="3"/><path d="M431.0 294.9L426.9 297.9" stroke="#34374c" stroke-width="3"/><path d="M421.8 301.6L427.5 297.5" stroke="#7c0606" stroke-width="3"/><path d="M432.6 257.7L426.9 253.6" stroke="#7c0606" stroke-width="3"/><path d="M423.4 339.0L427.5 342.0" stroke="#34374c" stroke-width="3"/><path d="M475.5 294.9L471.3 297.9" stroke="#34374c" stroke-width="3"/><path d="M466.3 301.6L472.0 297.5" stroke="#7c0606" stroke-width="3"/><path d="M477.0 257.7L471.3 253.6" stroke="#7c0606" stroke-width="3"/><path d="M467.8 339.0L472.0 342.0" stroke="#34374c" stroke-width="3"/><path d="M519.9 294.9L515.8 297.9" stroke="#34374c" stroke-width="3"/><path d="M510.7 301.6L516.4 297.5" stroke="#7c0606" stroke-width="3"/><path d="M521.5 257.7L515.8 253.6" stroke="#7c0606" stroke-width="3"/><path d="M512.3 339.0L516.4 342.0" stroke="#34374c" stroke-width="3"/><path d="M564.4 294.9L560.2 297.9" stroke="#34374c" stroke-width="3"/><path d="M555.2 301.6L560.9 297.5" stroke="#7c0606" stroke-width="3"/><path d="M565.9 257.7L560.2 253.6" stroke="#7c0606" stroke-width="3"/><path d="M556.7 339.0L560.9 342.0" stroke="#34374c" stroke-width="3"/><path d="M957.6 273.0L961.7 277.8" stroke="#283030" stroke-width="2.6"/><path d="M965.3 282.1L961.2 277.2" stroke="#283030" stroke-width="2.6"/><path d="M957.6 316.9L961.7 321.8" stroke="#283030" stroke-width="2.6"/><path d="M965.3 326.0L961.2 321.2" stroke="#283030" stroke-width="2.6"/><path d="M1014.9 252.8L1010.8 247.9" stroke="#283030" stroke-width="2.6"/><path d="M1007.3 287.6L1011.4 292.5" stroke="#283030" stroke-width="2.6"/><path d="M1014.9 296.7L1010.8 291.9" stroke="#283030" stroke-width="2.6"/><path d="M1007.3 331.6L1011.4 336.4" stroke="#283030" stroke-width="2.6"/><path d="M1056.9 258.3L1061.0 263.2" stroke="#283030" stroke-width="2.6"/><path d="M1064.6 267.4L1060.5 262.6" stroke="#283030" stroke-width="2.6"/><path d="M1056.9 302.3L1061.0 307.1" stroke="#283030" stroke-width="2.6"/><path d="M1064.6 311.4L1060.5 306.5" stroke="#283030" stroke-width="2.6"/><path d="M1106.6 273.0L1110.7 277.8" stroke="#283030" stroke-width="2.6"/><path d="M1114.2 282.1L1110.1 277.2" stroke="#283030" stroke-width="2.6"/><path d="M1106.6 316.9L1110.7 321.8" stroke="#283030" stroke-width="2.6"/><path d="M1114.2 326.0L1110.1 321.2" stroke="#283030" stroke-width="2.6"/><path d="M1163.9 252.8L1159.8 247.9" stroke="#283030" stroke-width="2.6"/><path d="M1156.2 287.6L1160.3 292.5" stroke="#283030" stroke-width="2.6"/><path d="M1163.9 296.7L1159.8 291.9" stroke="#283030" stroke-width="2.6"/><path d="M1156.2 331.6L1160.3 336.4" stroke="#283030" stroke-width="2.6"/><path d="M1205.9 258.3L1210.0 263.2" stroke="#283030" stroke-width="2.6"/><path d="M1213.5 267.4L1209.4 262.6" stroke="#283030" stroke-width="2.6"/><path d="M1205.9 302.3L1210.0 307.1" stroke="#283030" stroke-width="2.6"/><path d="M1213.5 311.4L1209.4 306.5" stroke="#283030" stroke-width="2.6"/><path d="M1255.5 273.0L1259.6 277.8" stroke="#283030" stroke-width="2.6"/><path d="M1263.2 282.1L1259.1 277.2" stroke="#283030" stroke-width="2.6"/><path d="M1255.5 316.9L1259.6 321.8" stroke="#283030" stroke-width="2.6"/><path d="M1263.2 326.0L1259.1 321.2" stroke="#283030" stroke-width="2.6"/><circle cx="598.4" cy="343.3" r="6.4" fill="url(#gO)"/><ellipse cx="598.0" cy="342.9" rx="2.2" ry="0.9" transform="rotate(35 598.0 342.9)" fill="#fff" opacity=".88"/><circle cx="617.7" cy="284.8" r="8.8" fill="url(#gMg)"/><ellipse cx="617.3" cy="284.4" rx="2.2" ry="0.9" transform="rotate(35 617.3 284.4)" fill="#fff" opacity=".88"/><circle cx="636.9" cy="314.0" r="6.4" fill="url(#gO)"/><ellipse cx="636.5" cy="313.6" rx="2.2" ry="0.9" transform="rotate(35 636.5 313.6)" fill="#fff" opacity=".88"/><circle cx="656.2" cy="343.2" r="8.8" fill="url(#gMg)"/><ellipse cx="655.8" cy="342.9" rx="2.2" ry="0.9" transform="rotate(35 655.8 342.9)" fill="#fff" opacity=".88"/><circle cx="675.5" cy="284.7" r="6.4" fill="url(#gO)"/><ellipse cx="675.1" cy="284.3" rx="2.2" ry="0.9" transform="rotate(35 675.1 284.3)" fill="#fff" opacity=".88"/><circle cx="694.8" cy="313.9" r="8.8" fill="url(#gMg)"/><ellipse cx="694.4" cy="313.6" rx="2.2" ry="0.9" transform="rotate(35 694.4 313.6)" fill="#fff" opacity=".88"/><circle cx="714.0" cy="343.2" r="6.4" fill="url(#gO)"/><ellipse cx="713.6" cy="342.8" rx="2.2" ry="0.9" transform="rotate(35 713.6 342.8)" fill="#fff" opacity=".88"/><circle cx="733.3" cy="284.6" r="8.8" fill="url(#gMg)"/><ellipse cx="732.9" cy="284.2" rx="2.2" ry="0.9" transform="rotate(35 732.9 284.2)" fill="#fff" opacity=".88"/><circle cx="752.6" cy="313.9" r="6.4" fill="url(#gO)"/><ellipse cx="752.2" cy="313.5" rx="2.2" ry="0.9" transform="rotate(35 752.2 313.5)" fill="#fff" opacity=".88"/><circle cx="771.8" cy="343.1" r="8.8" fill="url(#gMg)"/><ellipse cx="771.4" cy="342.8" rx="2.2" ry="0.9" transform="rotate(35 771.4 342.8)" fill="#fff" opacity=".88"/><circle cx="791.1" cy="284.6" r="6.4" fill="url(#gO)"/><ellipse cx="790.7" cy="284.2" rx="2.2" ry="0.9" transform="rotate(35 790.7 284.2)" fill="#fff" opacity=".88"/><circle cx="810.4" cy="313.8" r="8.8" fill="url(#gMg)"/><ellipse cx="810.0" cy="313.4" rx="2.2" ry="0.9" transform="rotate(35 810.0 313.4)" fill="#fff" opacity=".88"/><circle cx="829.6" cy="343.1" r="6.4" fill="url(#gO)"/><ellipse cx="829.2" cy="342.7" rx="2.2" ry="0.9" transform="rotate(35 829.2 342.7)" fill="#fff" opacity=".88"/><circle cx="848.9" cy="284.5" r="8.8" fill="url(#gMg)"/><ellipse cx="848.5" cy="284.1" rx="2.2" ry="0.9" transform="rotate(35 848.5 284.1)" fill="#fff" opacity=".88"/><circle cx="868.2" cy="313.8" r="6.4" fill="url(#gO)"/><ellipse cx="867.8" cy="313.4" rx="2.2" ry="0.9" transform="rotate(35 867.8 313.4)" fill="#fff" opacity=".88"/><circle cx="887.5" cy="343.0" r="8.8" fill="url(#gMg)"/><ellipse cx="887.1" cy="342.6" rx="2.2" ry="0.9" transform="rotate(35 887.1 342.6)" fill="#fff" opacity=".88"/><circle cx="906.7" cy="284.5" r="6.4" fill="url(#gO)"/><ellipse cx="906.3" cy="284.1" rx="2.2" ry="0.9" transform="rotate(35 906.3 284.1)" fill="#fff" opacity=".88"/><path d="M601.8 340.7L608.4 335.7" stroke="#b00606" stroke-width="2.9"/><path d="M622.3 281.2L627.6 277.2" stroke="#64b80c" stroke-width="2.5"/><path d="M613.0 288.3L607.7 292.3" stroke="#64b80c" stroke-width="2.5"/><path d="M617.7 292.0L617.7 307.1" stroke="#6cc40e" stroke-width="2.5"/><path d="M617.7 277.5L617.7 262.4" stroke="#6cc40e" stroke-width="2.5"/><path d="M624.4 287.3L637.3 292.2" stroke="#6cc40e" stroke-width="2.5"/><path d="M640.3 311.4L646.9 306.4" stroke="#b00606" stroke-width="2.9"/><path d="M633.6 316.6L627.0 321.6" stroke="#b00606" stroke-width="2.9"/><path d="M660.8 339.7L666.2 335.7" stroke="#64b80c" stroke-width="2.5"/><path d="M651.6 346.8L646.3 350.8" stroke="#64b80c" stroke-width="2.5"/><path d="M656.2 350.5L656.2 365.6" stroke="#6cc40e" stroke-width="2.5"/><path d="M656.2 336.0L656.2 320.9" stroke="#6cc40e" stroke-width="2.5"/><path d="M663.0 345.8L675.9 350.7" stroke="#6cc40e" stroke-width="2.5"/><path d="M649.5 340.7L636.6 335.8" stroke="#6cc40e" stroke-width="2.5"/><path d="M678.8 282.1L685.4 277.1" stroke="#b00606" stroke-width="2.9"/><path d="M672.1 287.3L665.5 292.3" stroke="#b00606" stroke-width="2.9"/><path d="M699.4 310.4L704.7 306.4" stroke="#64b80c" stroke-width="2.5"/><path d="M690.1 317.5L684.8 321.5" stroke="#64b80c" stroke-width="2.5"/><path d="M694.8 321.2L694.8 336.3" stroke="#6cc40e" stroke-width="2.5"/><path d="M694.8 306.7L694.8 291.6" stroke="#6cc40e" stroke-width="2.5"/><path d="M701.5 316.5L714.4 321.4" stroke="#6cc40e" stroke-width="2.5"/><path d="M688.0 311.4L675.1 306.5" stroke="#6cc40e" stroke-width="2.5"/><path d="M717.4 340.6L724.0 335.6" stroke="#b00606" stroke-width="2.9"/><path d="M710.7 345.8L704.1 350.8" stroke="#b00606" stroke-width="2.9"/><path d="M737.9 281.1L743.2 277.1" stroke="#64b80c" stroke-width="2.5"/><path d="M728.7 288.2L723.3 292.2" stroke="#64b80c" stroke-width="2.5"/><path d="M733.3 291.9L733.3 307.0" stroke="#6cc40e" stroke-width="2.5"/><path d="M733.3 277.4L733.3 262.3" stroke="#6cc40e" stroke-width="2.5"/><path d="M740.0 287.2L752.9 292.1" stroke="#6cc40e" stroke-width="2.5"/><path d="M726.5 282.1L713.6 277.2" stroke="#6cc40e" stroke-width="2.5"/><path d="M755.9 311.3L762.5 306.3" stroke="#b00606" stroke-width="2.9"/><path d="M749.2 316.5L742.6 321.5" stroke="#b00606" stroke-width="2.9"/><path d="M776.5 339.6L781.8 335.6" stroke="#64b80c" stroke-width="2.5"/><path d="M767.2 346.7L761.9 350.7" stroke="#64b80c" stroke-width="2.5"/><path d="M771.8 350.4L771.8 365.5" stroke="#6cc40e" stroke-width="2.5"/><path d="M771.8 335.9L771.8 320.8" stroke="#6cc40e" stroke-width="2.5"/><path d="M778.6 345.7L791.5 350.6" stroke="#6cc40e" stroke-width="2.5"/><path d="M765.1 340.6L752.2 335.7" stroke="#6cc40e" stroke-width="2.5"/><path d="M794.5 282.0L801.1 277.0" stroke="#b00606" stroke-width="2.9"/><path d="M787.7 287.2L781.1 292.2" stroke="#b00606" stroke-width="2.9"/><path d="M815.0 310.3L820.3 306.3" stroke="#64b80c" stroke-width="2.5"/><path d="M805.7 317.4L800.4 321.4" stroke="#64b80c" stroke-width="2.5"/><path d="M810.4 321.1L810.4 336.2" stroke="#6cc40e" stroke-width="2.5"/><path d="M810.4 306.6L810.4 291.5" stroke="#6cc40e" stroke-width="2.5"/><path d="M817.1 316.4L830.0 321.3" stroke="#6cc40e" stroke-width="2.5"/><path d="M803.6 311.3L790.7 306.4" stroke="#6cc40e" stroke-width="2.5"/><path d="M833.0 340.5L839.6 335.5" stroke="#b00606" stroke-width="2.9"/><path d="M826.3 345.7L819.7 350.7" stroke="#b00606" stroke-width="2.9"/><path d="M853.5 281.0L858.9 277.0" stroke="#64b80c" stroke-width="2.5"/><path d="M844.3 288.1L839.0 292.1" stroke="#64b80c" stroke-width="2.5"/><path d="M848.9 291.8L848.9 306.9" stroke="#6cc40e" stroke-width="2.5"/><path d="M848.9 277.3L848.9 262.2" stroke="#6cc40e" stroke-width="2.5"/><path d="M855.7 287.1L868.6 292.0" stroke="#6cc40e" stroke-width="2.5"/><path d="M842.2 282.0L829.3 277.1" stroke="#6cc40e" stroke-width="2.5"/><path d="M871.5 311.2L878.1 306.2" stroke="#b00606" stroke-width="2.9"/><path d="M864.8 316.4L858.2 321.4" stroke="#b00606" stroke-width="2.9"/><path d="M892.1 339.5L897.4 335.5" stroke="#64b80c" stroke-width="2.5"/><path d="M882.8 346.6L877.5 350.6" stroke="#64b80c" stroke-width="2.5"/><path d="M887.5 350.3L887.5 365.4" stroke="#6cc40e" stroke-width="2.5"/><path d="M887.5 335.8L887.5 320.7" stroke="#6cc40e" stroke-width="2.5"/><path d="M880.7 340.5L867.8 335.6" stroke="#6cc40e" stroke-width="2.5"/><path d="M903.4 287.1L896.8 292.1" stroke="#b00606" stroke-width="2.9"/></g><text x="395.3" y="268.4" font-family="Liberation Sans" font-size="16" fill="#00ae00" stroke="#00ae00" stroke-width=".45">B</text><text x="393.2" y="355.6" font-family="Liberation Sans" font-size="15" fill="#d40000">A</text><circle cx="398.7" cy="349.8" r="5.4" fill="none" stroke="#d8d8d8" stroke-width="1.3"/><text x="1135.3" y="356" font-family="Liberation Sans" font-size="16" fill="#0a78d2" stroke="#0a78d2" stroke-width=".45">C</text><text x="318.2" y="475" font-family="Liberation Sans" font-size="9.5" fill="#9a9a9a">X</text><rect x="315.2" y="452" width="3" height="23" fill="#00b400"/><path d="M316.7 443l3.6 10h-7.2z" fill="#00b400"/><rect x="318" y="474.7" width="25" height="2" fill="#d8d800"/><path d="M355 475.7l-10.2-3.100v6.200z" fill="#d8d800"/><circle cx="316.6" cy="475.7" r="3.3" fill="#f0f0f0"/><text x="316.8" y="444.6" font-family="Liberation Sans" font-size="10.5" fill="#b4b4b4">Y</text><text x="354" y="476.8" font-family="Liberation Sans" font-size="11" fill="#b4b4b4">Z</text></svg><!--VW1-->
<!-- job manager -->
<div class="a mono" style="left:279px;top:539px;line-height:14px">Job Manager</div>
<div class="a mono" style="left:601px;top:539px;line-height:14px">sftp log in successfully</div>
<div class="a mono" style="left:921px;top:539px;line-height:14px">log in successfully</div>
<div class="a green" style="left:279px;top:561px;width:1037px;height:248px;border:1px solid #828790"></div>
<!--JB0--><div class="a hdr" style="left:280px;top:562px;width:1035px;height:25px"></div>
<div class="a" style="left:280px;top:585px;width:1035px;height:1px;background:#d5d5d5"></div>
<div class="a" style="left:429px;top:563px;width:1px;height:22px;background:#e5e5e5"></div>
<div class="a" style="left:1024px;top:563px;width:1px;height:22px;background:#e5e5e5"></div>
<div class="a" style="left:1124px;top:563px;width:1px;height:22px;background:#e5e5e5"></div>
<div class="a" style="left:1224px;top:563px;width:1px;height:22px;background:#e5e5e5"></div>
<div class="th" style="left:322.4px;top:566px;font-size:12px;letter-spacing:0.45px">Description</div>
<div class="th" style="left:710.8px;top:566px;font-size:12px;letter-spacing:0.37px">Script</div>
<div class="th" style="left:1032.9px;top:566px;font-size:12px;letter-spacing:0.32px">Commit Status</div>
<div class="th" style="left:1157.6px;top:566px;font-size:12px;letter-spacing:-0.00px">Status</div>
<div class="th" style="left:1253.6px;top:566px;font-size:12px;letter-spacing:0.38px">Actions</div>
<div class="a" style="left:280px;top:791px;width:1035px;height:17px;background:#f0f0f0"></div>
<div class="a" style="left:298px;top:792px;width:798px;height:15px;border:1px solid #979797;border-radius:2px;background:linear-gradient(180deg,#f2f2f2 0,#e6e6e6 45%,#d2d2d2 50%,#cfcfcf 100%)"></div>
<svg class="a" style="left:280px;top:791px" width="1035" height="17" viewBox="280 791 1035 17"><path d="M290.5 795.500l-4.3 4 4.3 4z" fill="#222"/><path d="M1304.5 795.500l4.3 4-4.3 4z" fill="#222"/><path d="M694.5 796.500v6M696.5 796.500v6M698.5 796.500v6" stroke="#6a6a6a" stroke-width="1"/></svg>
<div class="a" style="left:1245px;top:534px;width:22px;height:22px;border:1.5px solid #5c5c5c;border-radius:3.5px;background:linear-gradient(180deg,#f2f2f2 0,#ececec 50%,#d6d6d6 100%)"></div>
<div class="a" style="left:1269px;top:534px;width:22px;height:22px;border:1px solid #aab6bd;border-radius:3.5px;background:#f5f5f5"></div>
<div class="a" style="left:1293px;top:534px;width:22px;height:22px;border:1.5px solid #5c5c5c;border-radius:3.5px;background:linear-gradient(180deg,#f2f2f2 0,#ececec 50%,#d6d6d6 100%)"></div>
<svg class="a" style="left:1245px;top:534px" width="70" height="22" viewBox="1245 534 70 22">
<g fill="none" stroke="#333" stroke-width="1.150" transform="translate(1256 545) scale(.9) translate(-1256 -545)">
<path d="M1254.8 537.800h2.400l.4 1.9 1.5.7 1.7-1.1 1.7 1.7-1.1 1.7.7 1.5 1.9.4v2.400l-1.9.4-.7 1.5 1.1 1.7-1.7 1.7-1.7-1.1-1.5.7-.4 1.900h-2.400l-.4-1.9-1.5-.7-1.7 1.1-1.7-1.7 1.1-1.7-.7-1.5-1.9-.4v-2.400l1.9-.4.7-1.5-1.1-1.7 1.7-1.7 1.7 1.1 1.5-.7z" stroke-linejoin="round"/><circle cx="1256" cy="545" r="3.2"/>
</g>
<g fill="none" stroke="#8a8a8a" stroke-width="1.2"><path d="M1273 549.500h2.500c3.5 0 4-8.5 8-8.500h2.500M1273 541h2.500c1.3 0 2 .9 2.7 2M1280.8 547c.8 1.4 1.6 2.5 2.7 2.500h2.5"/><path d="M1284.8 538.800l2.3 2.2-2.3 2.200M1284.8 547.300l2.3 2.2-2.3 2.2"/></g>
<g fill="none" stroke="#333" stroke-width="1.2"><path d="M1297.3 545.500c-.6-4.2 2.7-6.6 6.7-6.600h4M1310.7 544.500c.6 4.2-2.7 6.6-6.7 6.600h-4"/><path d="M1306.2 536.500l2.4 2.4-2.4 2.400M1301.8 548.700l-2.4 2.4 2.4 2.4"/><path d="M1299.5 546.500c.2-2.6 1.8-4.2 4.5-4.200h2.500M1308.5 543.500c-.2 2.6-1.8 4.2-4.5 4.200h-2.5" stroke-width="1"/></g>
</svg>
<svg class="a" style="left:1313px;top:828px" width="12" height="12" viewBox="0 0 12 12"><g fill="#b8b8b8"><rect x="8" y="2" width="2" height="2"/><rect x="5" y="5" width="2" height="2"/><rect x="8" y="5" width="2" height="2"/><rect x="2" y="8" width="2" height="2"/><rect x="5" y="8" width="2" height="2"/><rect x="8" y="8" width="2" height="2"/></g></svg>
<svg class="a" style="left:0;top:0" width="267" height="480" viewBox="0 0 267 480"><g transform="translate(0,88)"><path d="M239.5 5.500h5v4.500h-1.500M237.5 8.500h5v4.500h-5z" fill="none" stroke="#111" stroke-width="1.1"/><path d="M239 5.600h6M237 8.600h6" stroke="#111" stroke-width="1.6"/><path d="M253 6.200l7.2 7M260.2 6.200l-7.2 7" stroke="#111" stroke-width="1.5"/></g><g transform="translate(0,439)"><path d="M239.5 5.500h5v4.500h-1.500M237.5 8.500h5v4.500h-5z" fill="none" stroke="#111" stroke-width="1.1"/><path d="M239 5.600h6M237 8.600h6" stroke="#111" stroke-width="1.6"/><path d="M253 6.200l7.2 7M260.2 6.200l-7.2 7" stroke="#111" stroke-width="1.5"/></g></svg><!--JB1-->
</body></html>
